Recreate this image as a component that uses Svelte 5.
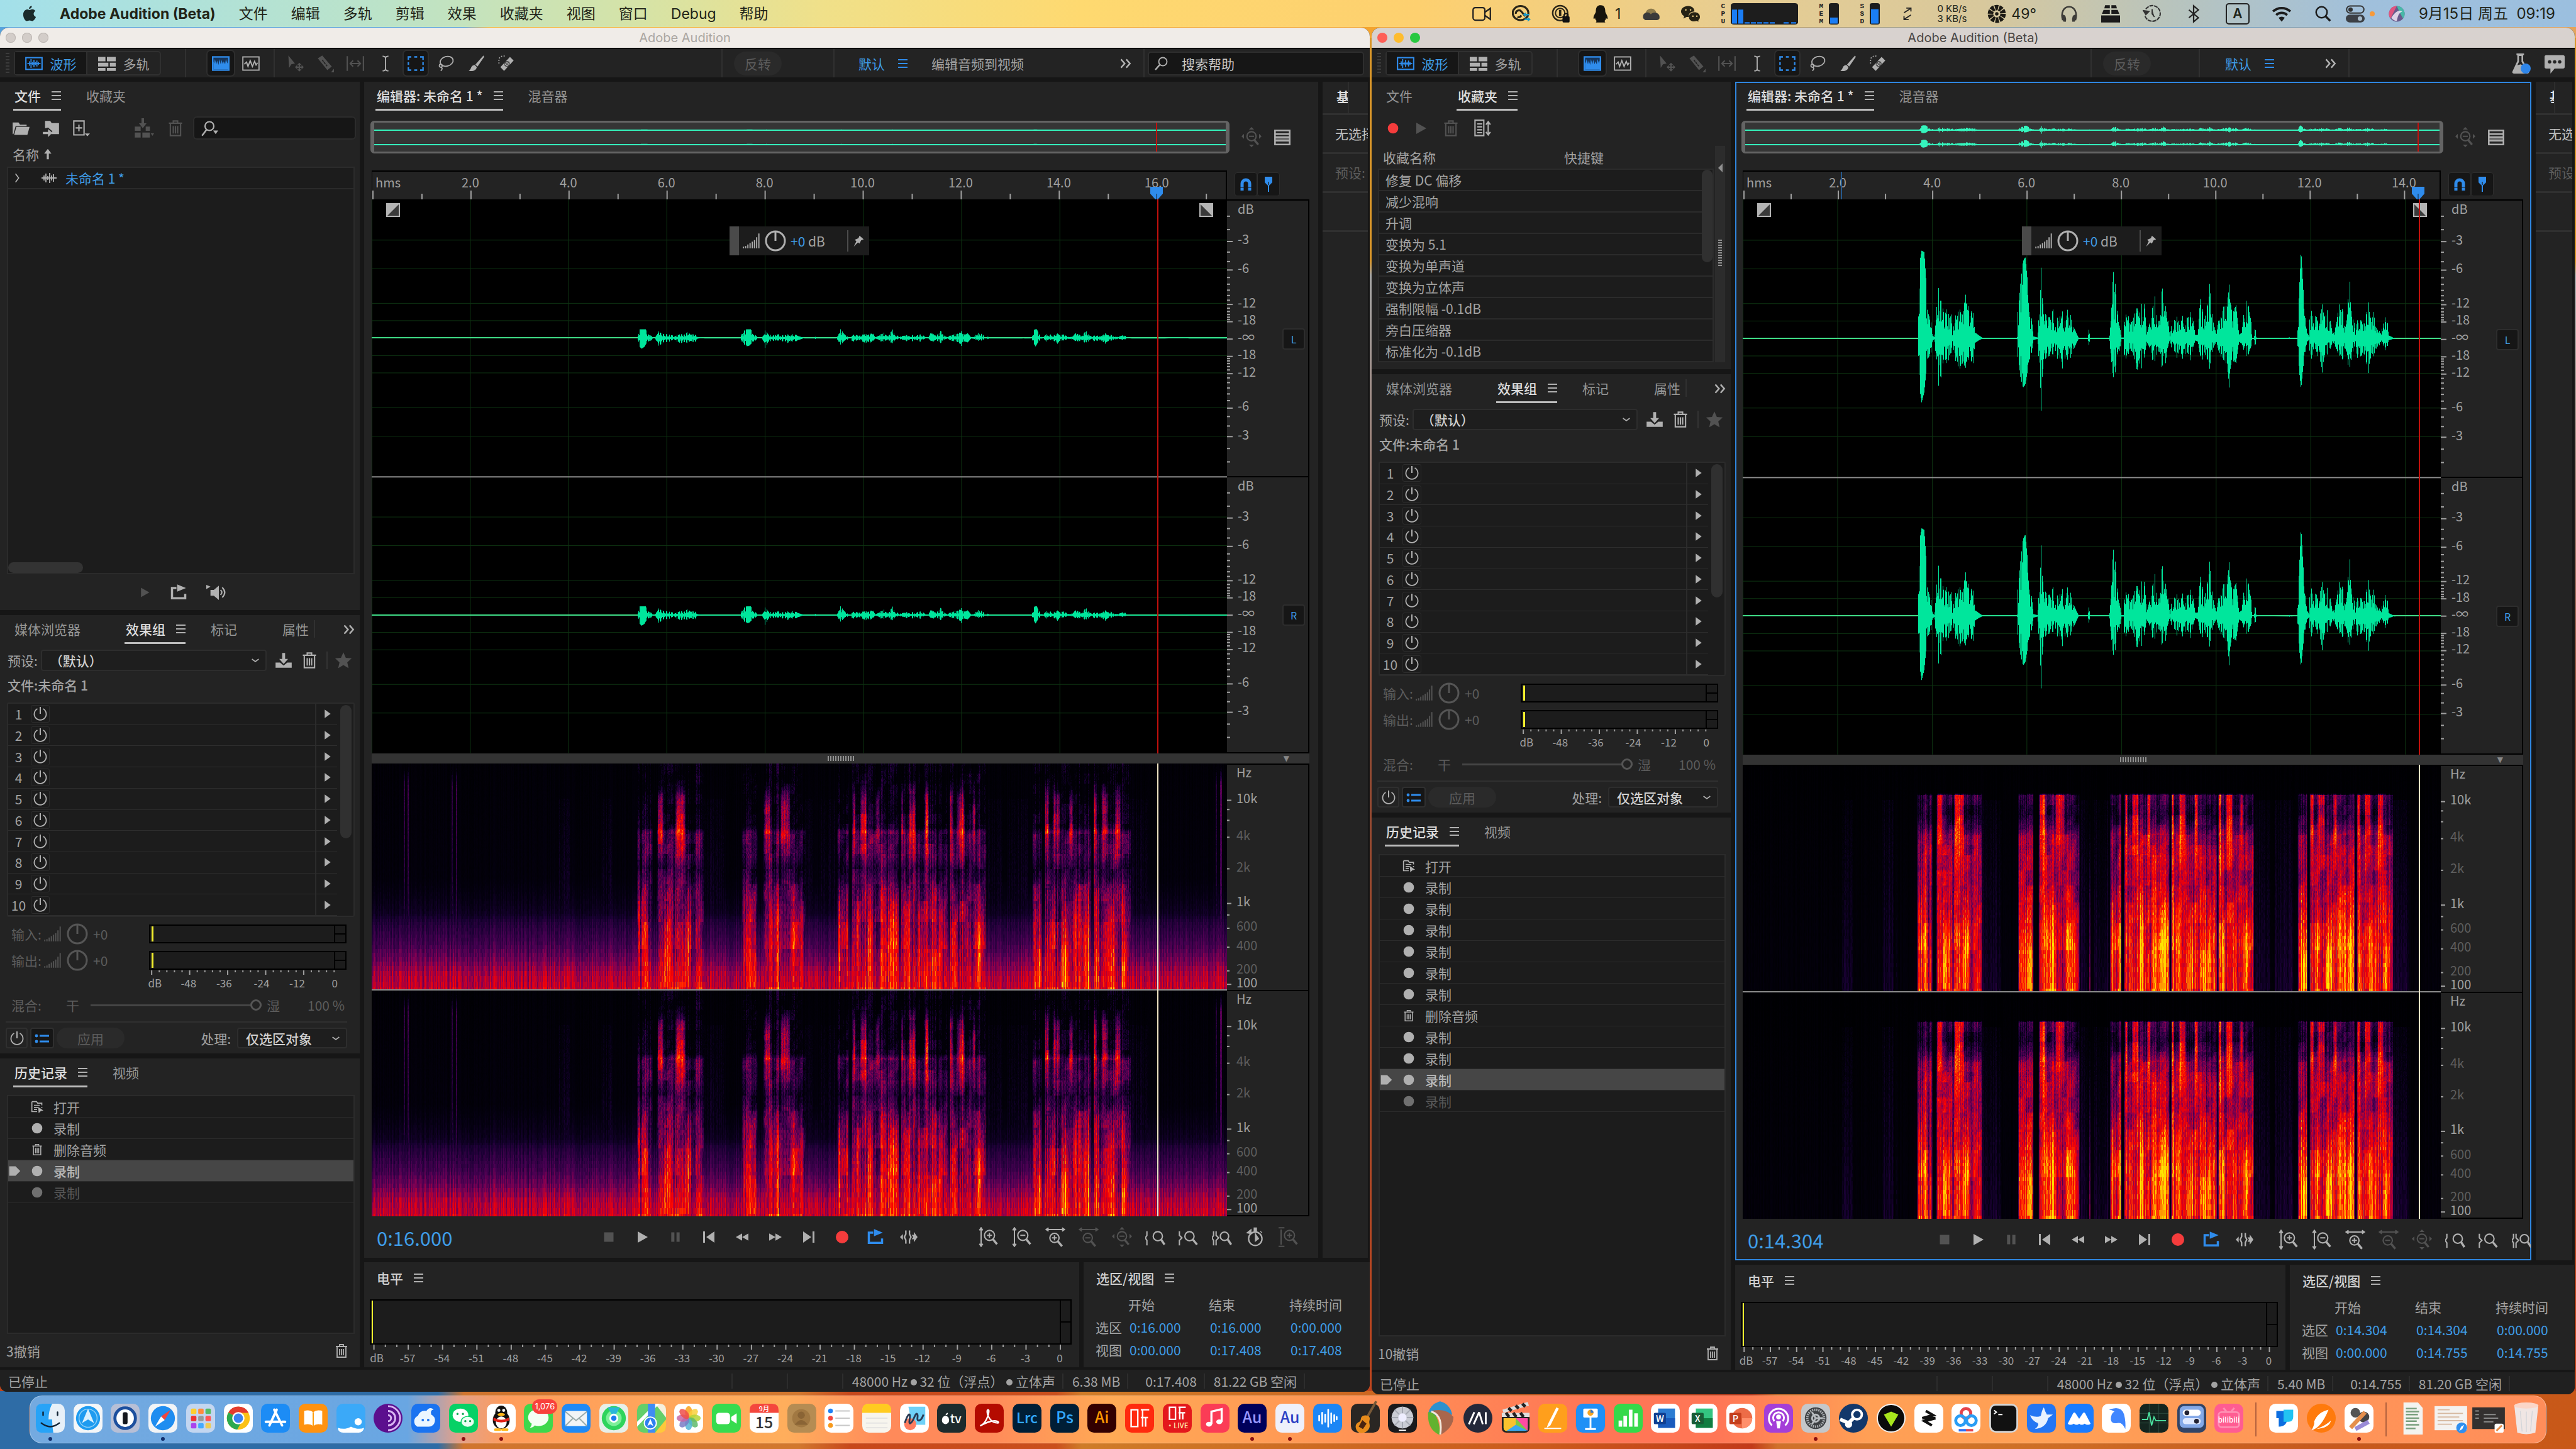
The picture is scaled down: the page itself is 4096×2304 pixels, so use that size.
<script>
  const menus = ['文件', '编辑', '多轨', '剪辑', '效果', '收藏夹', '视图', '窗口', 'Debug', '帮助'];

  const wins = [
    {
      id: 'main', title: 'Adobe Audition', focused: false, length: 17.408, head: 16, delay: 1.71, gain: 0.13,
      upper: ['文件', '收藏夹'], upperActive: 0, workspaces: ['编辑音频到视频'],
      history: [['open', '打开'], ['rec', '录制'], ['trash', '删除音频'], ['rec', '录制', 'current'], ['rec', '录制', 'undone']],
      undo: '3撤销', time: '0:16.000', total: '0:17.408', size: '6.38 MB', free: '81.22 GB 空闲'
    },
    {
      id: 'beta', title: 'Adobe Audition (Beta)', focused: true, length: 14.755, head: 14.304, delay: 0, gain: 1, hover: 2.07,
      upper: ['文件', '收藏夹'], upperActive: 1, workspaces: [],
      history: [
        ['open', '打开'], ['rec', '录制'], ['rec', '录制'], ['rec', '录制'], ['rec', '录制'], ['rec', '录制'], ['rec', '录制'],
        ['trash', '删除音频'], ['rec', '录制'], ['rec', '录制'], ['rec', '录制', 'current'], ['rec', '录制', 'undone']
      ],
      undo: '10撤销', time: '0:14.304', total: '0:14.755', size: '5.40 MB', free: '81.20 GB 空闲'
    }
  ];

  const favourites = ['修复 DC 偏移', '减少混响', '升调', '变换为 5.1', '变换为单声道', '变换为立体声', '强制限幅 -0.1dB', '旁白压缩器', '标准化为 -0.1dB'];
  const slots = [1, 2, 3, 4, 5, 6, 7, 8, 9, 10];
  const levels = Array.from({ length: 20 }, (_, i) => i * 3 - 57);

  // --- axes ---------------------------------------------------------------
  const dbMajor = [3, 6, 12, 18];
  const dbMinor = [1, 2, 4, 5, 7, 8, 9, 10, 11, 13, 14, 15, 16, 17];
  const amp = (db) => Math.pow(10, -db / 20);
  const hz = [
    [4, 'Hz', 0], [15.5, '10k', 2], [31.9, '4k', 1], [45.9, '2k', 1], [61.3, '1k', 2],
    [72.3, '600', 1], [80.7, '400', 1], [91.2, '200', 1], [97.2, '100', 2]
  ];
  const seconds = (len) => Array.from({ length: Math.floor(len) + 1 }, (_, i) => i);

  // --- take: [position, peak up, peak down] -------------------------------
  const take = `345 60 60,349 220 150,352 245 180,357 240 150,360 170 100,363 90 70,366 60 50,369 50 45,372 8 8,376 2 2,
    378 45 45,380 90 60,383 143 135,388 105 110,392 80 65,397 82 70,402 68 62,407 66 40,409 8 8,412 40 40,415 65 65,420 75 80,423 80 85,
    428 65 70,433 125 85,438 90 60,444 75 65,449 70 70,452 15 12,458 8 6,465 1 1,529 1 1,530 70 50,535 155 110,540 215 138,544 228 130,
    548 165 95,552 60 60,556 55 40,559 5 5,567 2 2,569 60 60,573 206 213,577 90 80,582 65 55,588 58 50,596 82 45,600 30 35,604 60 60,
    608 60 55,613 75 85,618 45 55,622 80 60,628 65 55,634 30 30,640 10 10,643 1 1,660 1 1,662 25 20,664 1 1,700 1 1,702 40 40,704 90 70,
    707 188 110,711 150 95,715 70 40,719 35 35,722 2 2,726 2 2,727 35 45,730 68 60,735 62 45,740 45 35,746 70 60,751 85 90,756 70 70,
    760 98 85,765 95 50,769 10 10,774 40 25,779 80 60,784 120 65,788 60 45,793 50 40,797 130 80,800 182 88,804 90 70,809 45 20,812 3 3,
    815 40 30,820 50 35,825 60 55,830 35 30,836 65 60,840 35 45,844 60 40,849 75 65,855 50 25,859 8 6,864 10 10,868 110 50,873 80 60,
    877 60 45,881 90 60,886 157 88,890 70 40,895 30 20,898 8 8,902 50 35,906 55 50,911 88 60,916 90 70,919 110 90,922 154 143,
    926 80 60,930 75 65,934 100 75,940 10 10,945 15 15,948 60 30,953 105 50,958 90 45,962 60 30,964 1 1,968 1 1,970 33 25,972 1 1,
    1031 0 0,1033 3 3,1036 0 0,1048 1 1,1049 30 30,1052 150 100,1055 248 142,1059 140 80,1063 50 35,1067 15 10,1070 3 3,1071 60 40,
    1074 80 60,1078 40 30,1082 75 35,1086 50 50,1090 70 65,1094 96 98,1098 60 50,1104 80 45,1109 50 30,1116 15 15,1120 40 30,
    1126 98 50,1132 80 60,1138 30 30,1142 110 75,1145 168 83,1149 75 60,1154 40 20,1156 8 8,1159 50 55,1166 50 50,1173 40 45,1176 70 70,
    1180 105 102,1184 55 55,1189 75 50,1194 30 30,1200 20 20,1207 40 20,1211 60 35,1215 50 25,1217 8 6,1224 3 3,1227 0 0,
    1285 0 0,1300 14 14,1315 8 8,1322 16 14,1330 0 0,1395 0 0,1400 12 12,1420 18 18,1424 0 0`
    .split(',').map((p) => p.trim().split(/\s+/).map(Number));

  const bursts = [[344, 372], [379, 464], [531, 559], [569, 645], [701, 722], [727, 812], [814, 900], [901, 968], [1049, 1067], [1071, 1155], [1158, 1226]];
  const strong = [[344, 364], [392, 405], [430, 442], [532, 556], [582, 602], [618, 642], [702, 722], [735, 743], [755, 765], [778, 812], [822, 830], [843, 856], [868, 895], [908, 915], [928, 936], [945, 963], [1050, 1066], [1080, 1090], [1100, 1112], [1122, 1151], [1160, 1170], [1178, 1196], [1207, 1217]];
  const sibilants = [[380, 391], [413, 430], [570, 581], [600, 617], [729, 734], [742, 754], [770, 777], [815, 819], [830, 841], [858, 864], [901, 907], [915, 928], [942, 948], [1071, 1079], [1086, 1099], [1115, 1122], [1158, 1164], [1173, 1184], [1197, 1207]];
  const tails = [[203, 226], [280, 300], [455, 500], [640, 660], [670, 700], [968, 998], [1005, 1042], [1218, 1256]];

  const hash = (x, y) => {
    let n = Math.imul(x + 71, 374761393) + Math.imul(y + 13, 668265263);
    n = Math.imul(n ^ (n >>> 13), 1274126177);
    return ((n ^ (n >>> 16)) >>> 0) / 4294967295;
  };
  const ramp = (pts, f) => {
    if (f <= pts[0][0]) return pts[0][1];
    for (let i = 1; i < pts.length; i++) {
      const [a, va] = pts[i - 1];
      const [b, vb] = pts[i];
      if (f <= b) return va + ((vb - va) * (f - a)) / (b - a);
    }
    return pts[pts.length - 1][1];
  };
  const smooth = (x, seed) => {
    const i = Math.floor(x);
    const k = x - i;
    return hash(i, seed) * (1 - k) + hash(i + 1, seed) * k;
  };
  const inside = (list, p) => {
    let best = 0;
    for (const [a, b] of list) best = Math.max(best, Math.min(1, (Math.min(p - a, b - p) + 1) / 3));
    return Math.max(0, best);
  };
  const position = (win, x, w) => 21 + ((x / w) * win.length - win.delay) / 0.011408;

  // heat colours from silence to full scale
  const heat = [[0, 0, 0, 2], [0.1, 4, 0, 16], [0.22, 24, 0, 50], [0.38, 72, 0, 82], [0.52, 135, 0, 82], [0.64, 205, 0, 34], [0.74, 250, 0, 0], [0.84, 255, 60, 0], [0.93, 255, 160, 0], [1, 255, 232, 0]];
  const lut = Array.from({ length: 256 }, (_, i) => [1, 2, 3].map((c) => ramp(heat.map((s) => [s[0], s[c]]), i / 255)));

  const loud = {
    floor: [[0, 0], [0.3, 0.02], [1, 0.05]],
    voice: [[0.125, 0], [0.13, 0.3], [0.22, 0.2], [0.28, 0.36], [0.31, 0.5], [0.4, 0.58], [0.5, 0.54], [0.6, 0.6], [0.75, 0.67], [1, 0.7]],
    hiss: [[0.125, 0], [0.13, 0.42], [0.24, 0.5], [0.3, 0.32], [0.38, 0.16], [0.5, 0.08], [1, 0.02]],
    tone: [[0.5, 0], [0.62, 0.06], [0.72, 0.13], [0.8, 0.19], [1, 0.15]],
    swing: 1
  };
  const quiet = {
    floor: [[0, 0.03], [0.5, 0.06], [0.6, 0.12], [0.66, 0.16], [0.69, 0.24], [0.8, 0.36], [0.86, 0.46], [0.92, 0.58], [1, 0.64]],
    voice: [[0.1, 0.02], [0.28, 0.1], [0.3, 0.32], [0.4, 0.32], [0.46, 0.2], [0.55, 0.34], [0.72, 0.42], [0.85, 0.54], [1, 0.68]],
    hiss: [[0.06, 0], [0.14, 0.36], [0.2, 0.5], [0.28, 0.52], [0.31, 0.38], [0.36, 0.26], [0.45, 0.12], [1, 0]],
    tone: [[0.5, 0], [0.6, 0.12], [0.7, 0.22], [0.85, 0.18], [1, 0.06]],
    swing: 1.1
  };

  function spectrum(canvas, win) {
    const w = canvas.width;
    const h = canvas.height >> 1;
    const ctx = canvas.getContext('2d');
    const img = ctx.createImageData(w, h);
    const m = win.gain === 1 ? loud : quiet;
    const bins = [];
    for (let y = 0; y < h; ) {
      const f = y / h;
      const n = Math.round(2 + 8 * f * f * f);
      bins.push([y, Math.min(h, y + n), ramp(m.floor, f), ramp(m.voice, f), ramp(m.hiss, f), ramp(m.tone, f), f]);
      y += n;
    }
    const clicks = win.gain === 1 ? [[2.15, 0.26], [3.25, 0.14], [7.33, 0.6], [11.6, 0.3]] : [[0.66, 0.32], [0.74, 0.36], [1.63, 0.3], [1.72, 0.36], [17.18, 0.28], [17.28, 0.42]];
    for (let x = 0; x < w; x++) {
      const p = position(win, x, w);
      const t = (x / w) * win.length;
      const v = inside(bursts, p);
      const s = inside(strong, p);
      const k = inside(sibilants, p);
      const haze = inside(tails, p);
      const col = hash(x, 5) - 0.5;
      const slow = smooth(p / 5, 9) - 0.5;
      const pulse = Math.sin(p * 2.15);
      let click = 0;
      for (const [ct, cv] of clicks) if (Math.abs(t - ct) < 0.014) click = cv;
      bins.forEach(([y0, y1, fl, vo, hi, to, f], b) => {
        const cell = hash(x, b * 7 + 3) - 0.5;
        const form = smooth(p / 9 + b * 0.07, 40 + (b >> 3)) - 0.5;
        let a = fl + (cell * 0.5 + col) * (0.04 + fl * 0.3);
        if (haze && f > 0.15) a = Math.max(a, haze * (0.04 + f * 0.14) + cell * 0.08 + col * 0.12);
        if (click) {
          const fall = win.gain === 1 ? Math.max(0, f - 0.15) : f < 0.1 ? f * 10 : 1 - f * 0.4;
          a = Math.max(a, click * fall + cell * 0.1);
        }
        if (v > 0 && (vo > 0 || hi > 0)) {
          const tex = (cell * 0.16 + col * 0.22 + slow * 0.24 + form * 0.2) * m.swing + (f > 0.55 ? pulse * 0.07 : 0);
          a = Math.max(a, v * (vo + hi * k + to * s + tex));
        }
        const c = lut[Math.max(0, Math.min(255, Math.round(a * 255)))];
        for (let y = y0; y < y1; y++) {
          const i = (y * w + x) * 4;
          img.data[i] = c[0];
          img.data[i + 1] = c[1];
          img.data[i + 2] = c[2];
          img.data[i + 3] = 255;
        }
      });
    }
    ctx.putImageData(img, 0, 0);
    ctx.putImageData(img, 0, canvas.height - h);
    ctx.fillStyle = '#8c8c8c';
    ctx.fillRect(0, h - 1, w, 2);
  }

  function wave(canvas, win, overview) {
    const w = canvas.width;
    const half = canvas.height / 4;
    const ctx = canvas.getContext('2d');
    ctx.clearRect(0, 0, w, canvas.height);
    for (const mid of [half, half * 3]) {
      ctx.fillStyle = overview ? '#35f5bd' : '#3fdc86';
      ctx.fillRect(0, Math.round(mid) - 1, w, 2);
      ctx.fillStyle = overview ? '#35f5bd' : '#00e69c';
      for (let x = 0; x < w; x++) {
        const p = position(win, x, w);
        if (p < 344 || (win.gain === 1 && p > 1230)) continue;
        const i = take.findIndex((q) => q[0] >= p);
        if (i < 1) continue;
        const [a, ua, da] = take[i - 1];
        const [b, ub, db] = take[i];
        const r = (p - a) / (b - a);
        const j = hash(x, 77) > 0.5 ? 0.75 + 0.25 * hash(x, 3) : 0.3 + 0.35 * hash(x, 4);
        const edge = ua < 12 || ub < 12 || r < 0.12 || r > 0.88 || ua + ub > 380 ? 1 : j;
        let up = ((ua + (ub - ua) * r) * edge) / 388;
        let dn = ((da + (db - da) * r) * edge) / 388;
        if (win.gain < 1) {
          const tail = p > 1230 ? 0.5 : 1;
          up = Math.min(0.062, up * win.gain * tail);
          dn = Math.min(0.078, dn * win.gain * tail * 1.3);
        }
        ctx.fillRect(x, mid - up * half, 1, Math.max(1, (up + dn) * half));
      }
    }
  }

  function paint(canvas, { kind, win }) {
    const draw = () => {
      const w = canvas.clientWidth;
      const h = canvas.clientHeight;
      if (!w || !h) return;
      canvas.width = w;
      canvas.height = h;
      if (kind === 'spectrum') spectrum(canvas, win);
      else wave(canvas, win, kind === 'overview');
    };
    draw();
    const ro = new ResizeObserver(draw);
    ro.observe(canvas);
    return { destroy: () => ro.disconnect() };
  }

  // --- interface icons, 24 unit box ---------------------------------------
  const mag = '<circle cx="13" cy="10" r="6" fill="none" stroke="currentColor" stroke-width="1.6"/><path d="M17 14.500l5 6" stroke="currentColor" stroke-width="2.600"/>';
  const art = {
    wavebox: '<rect x="1" y="4" width="22" height="16" fill="none" stroke="currentColor" stroke-width="1.800"/><path d="M3 12h18M6 9v6M8 6v12M10 10v4M12 7v10M14 10v4M16 8v8M18 10v4" stroke="currentColor" stroke-width="1.500"/>',
    multi: '<path d="M0 3h10v6H0zM12 3h12v6H12zM0 11h14v5H0zM16 11h8v5h-8zM0 18h10v4H0zM12 18h12v4H12z" fill="currentColor"/>',
    waveview: '<rect x="1" y="3" width="22" height="18" fill="#15355c" stroke="currentColor" stroke-width="2"/><path d="M2 20V9l1 3 1-6 2 7 1-5 2 6 1-8 2 7 1-6 2 6 1-4 2 4 1-7 2 6 1-4 1 3v9z" fill="currentColor"/>',
    spectral: '<rect x="1" y="3" width="22" height="18" fill="none" stroke="currentColor" stroke-width="1.600"/><path d="M3 13l3-3 2 6 3-8 3 8 3-7 2 5 2-3" fill="none" stroke="currentColor" stroke-width="1.600"/>',
    move: '<path d="M3 1l9 11-5 1-3 5z" fill="currentColor"/><path d="M18 11l3 3h-2v2h2v-2l3 3-3 3v-2h-2v2h2l-3 3-3-3h2v-2h-2v2l-3-3 3-3v2h2v-2h-2z" fill="currentColor"/>',
    razor: '<path d="M2 5l6-4 13 15-6 5z" fill="currentColor"/><path d="M8 7l7 9" stroke="#232323" stroke-width="1.500" stroke-dasharray="3 1"/><path d="M24 24v-5l-4 5z" fill="currentColor"/>',
    slip: '<path d="M1 2v20M23 2v20M5 12h14M9 8l-4 4 4 4M15 8l4 4-4 4" fill="none" stroke="currentColor" stroke-width="1.800"/>',
    ibeam: '<path d="M8 2c2 0 4 1 4 3v14c0 2-2 3-4 3M16 2c-2 0-4 1-4 3v14c0 2 2 3 4 3" fill="none" stroke="currentColor" stroke-width="1.600"/>',
    marquee: '<path d="M2 7V3h4M10 3h4M18 3h4v4M22 10v4M22 17v4h-4M14 21h-4M6 21H2v-4M2 14v-4" fill="none" stroke="currentColor" stroke-width="2"/>',
    lasso: '<ellipse cx="13" cy="9" rx="9" ry="6.500" transform="rotate(-15 13 9)" fill="none" stroke="currentColor" stroke-width="1.600"/><circle cx="5" cy="15" r="2" fill="none" stroke="currentColor" stroke-width="1.400"/><path d="M5 17c3 1 2 3 0 5" fill="none" stroke="currentColor" stroke-width="1.500"/>',
    brush: '<path d="M22 1l1 2-9 13-3-2.500z" fill="currentColor"/><path d="M10 14l3 3c-1 5-6 6-11 5 4-2 2-7 8-8z" fill="currentColor"/>',
    heal: '<path d="M4 17L17 3l5 5L9 22z" fill="currentColor"/><circle cx="13" cy="12.500" r="4" fill="#232323" fill-opacity=".7"/><path d="M11 13h.1M13 11h.1M13 14.500h.1M15 12.500h.1" stroke="currentColor" stroke-width="2" stroke-linecap="round"/><path d="M2 12V7c0-4 5-6 9-5" fill="none" stroke="currentColor" stroke-width="1.500" stroke-dasharray="1.500 2"/>',
    folder: '<path d="M1 4h8l2 3h9v2H5L2 20H1z" fill="currentColor"/><path d="M6 10h18l-3 11H3z" fill="currentColor"/>',
    import: '<path d="M4 2h7l2 3h10v15H12l2-4-6-5-4 1z" fill="currentColor"/><path d="M1 17h7v-4l6 5-6 6v-4H1z" fill="currentColor"/>',
    newfile: '<path d="M2 2h14v19H2z" fill="none" stroke="currentColor" stroke-width="1.800"/><path d="M9 7v9M4.500 11.500h9" stroke="currentColor" stroke-width="1.800"/><path d="M17 19h7l-3.500 4z" fill="currentColor"/>',
    insert: '<path d="M1 10h7v5H1zM1 17h7v6H1zM10 17h9v6h-9zM14 10h5v5h-5zM9 0h3v6h3l-4.500 6L6 6h3z" fill="currentColor"/><path d="M20 18h4l-2 3z" fill="currentColor"/>',
    trash: '<path d="M3 5h18M9 4V2h6v2M5 6v16h14V6M9 9v10M12 9v10M15 9v10" fill="none" stroke="currentColor" stroke-width="1.800"/>',
    filter: '<circle cx="12" cy="9" r="6" fill="none" stroke="currentColor" stroke-width="1.900"/><path d="M8 14l-6 8" stroke="currentColor" stroke-width="2.200"/><path d="M17 15h7l-3.500 5z" fill="currentColor"/>',
    find: '<circle cx="14" cy="9" r="6.500" fill="none" stroke="currentColor" stroke-width="1.900"/><path d="M9 14l-7 8" stroke="currentColor" stroke-width="2.600"/>',
    chevron: '<path d="M8 4l6 8-6 8" fill="none" stroke="currentColor" stroke-width="2"/>',
    down: '<path d="M4 9l8 6 8-6" fill="none" stroke="currentColor" stroke-width="2.400"/>',
    up: '<path d="M12 2l7 9h-5v11h-4V11H5z" fill="currentColor"/>',
    more: '<path d="M3 4l7 8-7 8M13 4l7 8-7 8" fill="none" stroke="currentColor" stroke-width="3"/>',
    clip: '<path d="M0 12h24M4 8v8M7 5v14M10 9v6M13 4v16M16 8v8M19 6v12" stroke="currentColor" stroke-width="1.800"/>',
    play: '<path d="M5 3l16 9-16 9z" fill="currentColor"/>',
    slot: '<path d="M5 2l14 10L5 22z" fill="currentColor"/>',
    loop: '<path d="M9 6H3v14h18v-6" fill="none" stroke="currentColor" stroke-width="3"/><path d="M10 1l12 5-12 5z" fill="currentColor"/>',
    speaker: '<path d="M0 3l5 2-5 3zM5 9h4l6-5v17l-6-5H5z" fill="currentColor"/><path d="M17 9q3 3 0 6M19 6q6 6 0 12" fill="none" stroke="currentColor" stroke-width="1.600"/>',
    save: '<path d="M1 15h6l5 4 5-4h6v7H1z" fill="currentColor"/><path d="M10 2h4v8h4l-6 7-6-7h4z" fill="currentColor"/>',
    star: '<path d="M12 1l3.300 7.500 8 .8-6 5.400 1.800 8L12 18.500 4.900 22.700l1.800-8-6-5.400 8-.8z" fill="currentColor"/>',
    power: '<path d="M7.500 4a9.500 9.500 0 1 0 9 0" fill="none" stroke="currentColor" stroke-width="1.800"/><path d="M12 1v11" stroke="currentColor" stroke-width="2"/>',
    listed: '<circle cx="3" cy="8" r="2.400" fill="currentColor"/><circle cx="3" cy="17" r="2.400" fill="currentColor"/><path d="M8 8h15M8 17h15" stroke="currentColor" stroke-width="3"/>',
    ramp: '<path d="M1 22v-2M4 22v-3M7 22v-5M10 22v-7M13 22v-9M16 22V11M19 22V7M22 22V2" stroke="currentColor" stroke-width="1.600"/>',
    dial: '<circle cx="12" cy="12" r="10" fill="none" stroke="currentColor" stroke-width="2"/><path d="M12 2v10" stroke="currentColor" stroke-width="2"/>',
    pin: '<path d="M14 2l8 7-5 2-3 6-3-2-8 8 5-10-3-3 7-3z" fill="currentColor"/>',
    rec: '<circle cx="12" cy="12" r="10" fill="currentColor"/>',
    open: '<path d="M2 2h9l2 3h8v4M21 14v-2M12 21H2V2M6 9h11M6 13h8M6 17h6" fill="none" stroke="currentColor" stroke-width="2"/><path d="M14 12l10 7-5 1-4 4z" fill="currentColor"/>',
    mark: '<path d="M2 3h12l9 9-9 9H2z" fill="currentColor"/>',
    batch: '<path d="M2 1h12v21H2z" fill="none" stroke="currentColor" stroke-width="1.800"/><path d="M5 6h7M5 10h7M5 14h7M5 18h7M20 4v16M17 7l3-4 3 4M17 17l3 4 3-4" fill="none" stroke="currentColor" stroke-width="1.800"/>',
    navzoom: '<circle cx="12" cy="11" r="5.500" fill="none" stroke="currentColor" stroke-width="1.600"/><path d="M15 15l5 6" stroke="currentColor" stroke-width="2.600"/><path d="M9 11h6" stroke="currentColor" stroke-width="1.500"/><path d="M12 0l3 3H9zM12 24l3-3H9zM0 11l3-3v6zM24 11l-3-3v6z" fill="currentColor"/>',
    rows: '<path d="M2 3h20v19H2zM2 8h20M2 12h20M2 17h20" fill="none" stroke="currentColor" stroke-width="2.200"/><path d="M3 13h18v4H3z" fill="currentColor" opacity=".5"/>',
    magnet: '<path d="M6 22V11a6 6 0 0 1 12 0v11" fill="none" stroke="currentColor" stroke-width="5"/><path d="M3 17h6M15 17h6" stroke="#161616" stroke-width="1.200"/>',
    tack: '<path d="M6 0h12v9l-5 5v10h-2V14L6 9z" fill="currentColor"/><path d="M12 8v5" stroke="#161616" stroke-width="1.200"/>',
    stop: '<path d="M3 3h18v18H3z" fill="currentColor"/>',
    pause: '<path d="M4 3h6v18H4zM14 3h6v18h-6z" fill="currentColor"/>',
    prev: '<path d="M3 3h3v18H3zM21 3v18L8 12z" fill="currentColor"/>',
    next: '<path d="M18 3h3v18h-3zM3 3v18l13-9z" fill="currentColor"/>',
    rew: '<path d="M12 5v14L0 12zM24 5v14l-12-7z" fill="currentColor"/>',
    ff: '<path d="M0 5v14l12-7zM12 5v14l12-7z" fill="currentColor"/>',
    skip: '<path d="M8 3v5l-2 4 2 4v5M13 3v5l2 4-2 4v5" fill="none" stroke="currentColor" stroke-width="2"/><path d="M16 9h3V5l5 7-5 7v-4h-3l2-3zM4 8v8l-4-4z" fill="currentColor"/>',
    vin: mag + '<path d="M3 1v22M1 4l2-3 2 3M1 20l2 3 2-3M10 10h6M13 7v6" fill="none" stroke="currentColor" stroke-width="1.500"/>',
    vout: mag + '<path d="M3 1v22M1 4l2-3 2 3M1 20l2 3 2-3M10 10h6" fill="none" stroke="currentColor" stroke-width="1.500"/>',
    hin: '<circle cx="11" cy="13" r="5.500" fill="none" stroke="currentColor" stroke-width="1.600"/><path d="M15 17l5 6" stroke="currentColor" stroke-width="2.600"/><path d="M1 3h22M4 1L1 3l3 2M20 1l3 2-3 2M8 13h6M11 10v6" fill="none" stroke="currentColor" stroke-width="1.500"/>',
    hout: '<circle cx="11" cy="13" r="5.500" fill="none" stroke="currentColor" stroke-width="1.600"/><path d="M15 17l5 6" stroke="currentColor" stroke-width="2.600"/><path d="M1 3h22M4 1L1 3l3 2M20 1l3 2-3 2M8 13h6" fill="none" stroke="currentColor" stroke-width="1.500"/>',
    zin: '<path d="M2 5v5l-2 3 2 3v6" fill="none" stroke="currentColor" stroke-width="1.600"/><circle cx="15" cy="11" r="5.500" fill="none" stroke="currentColor" stroke-width="1.600"/><path d="M19 15l4 6" stroke="currentColor" stroke-width="2.600"/>',
    zout: '<path d="M1 5v5l3 3-3 3v6" fill="none" stroke="currentColor" stroke-width="1.600"/><circle cx="13" cy="11" r="5.500" fill="none" stroke="currentColor" stroke-width="1.600"/><path d="M17 15l5 6" stroke="currentColor" stroke-width="2.600"/>',
    zsel: '<path d="M2 5v5l-2 3 2 3v6M5 5v5l3 3-3 3v6" fill="none" stroke="currentColor" stroke-width="1.600"/><circle cx="15" cy="11" r="5" fill="none" stroke="currentColor" stroke-width="1.600"/><path d="M19 15l4 6" stroke="currentColor" stroke-width="2.600"/>',
    timer: '<circle cx="12" cy="14" r="8" fill="none" stroke="currentColor" stroke-width="1.700"/><path d="M10.500 1h3v4h-3zM2 7l5-4v5zM12 8l4 6-4 3zM18 5l2 2" fill="currentColor" stroke="currentColor" stroke-width="1"/>',
    vfull: mag + '<path d="M3 3v18M0 1h7M0 23h7M10 10h6M13 7v6" fill="none" stroke="currentColor" stroke-width="1.500"/>',
    flask: '<path d="M7 0h9v2h-1v7l7 13q0 2-2 2H4q-2 0-2-2L8 9V2H7z" fill="currentColor"/><path d="M10 3h3v7l3 5-4-2-4 1 2-4z" fill="#232323"/><circle cx="18" cy="18" r="6" fill="#2f86ea"/>',
    chat: '<path d="M2 2h20q2 0 2 2v12q0 2-2 2H12l-5 6v-6H2q-2 0-2-2V4q0-2 2-2z" fill="currentColor"/><path d="M6 10h.1M12 10h.1M18 10h.1" stroke="#232323" stroke-width="4" stroke-linecap="round"/>'
  };

  const tools = [['move', '移动', 'off'], ['razor', '切断所选剪辑', 'off'], ['slip', '滑动', 'off'], ['ibeam', '时间选择', ''], ['marquee', '框选', 'on'], ['lasso', '套索选择', ''], ['brush', '画笔选择', ''], ['heal', '污点修复刷', '']];
  const transport = [['stop', '停止', 'off'], ['play', '播放', ''], ['pause', '暂停', 'off'], ['prev', '上一个', ''], ['rew', '快退', ''], ['ff', '快进', ''], ['next', '下一个', ''], ['rec', '录音', 'red'], ['loop', '循环', 'blue'], ['skip', '跳过', '']];
  const zooms = [['vin', '放大振幅', ''], ['vout', '缩小振幅', ''], ['hin', '放大时间', ''], ['hout', '缩小时间', 'off'], ['navzoom', '全部缩小', 'off'], ['zin', '放大入点', ''], ['zout', '放大出点', ''], ['zsel', '缩放选区', ''], ['timer', '定时', ''], ['vfull', '重置振幅', 'off']];
  const small = ['stop', 'pause', 'rew', 'ff'];
  const transportSize = (name) => (name === 'loop' || name === 'skip' ? 'l' : small.includes(name) ? 's' : 'm');

  // --- menu bar extras ----------------------------------------------------
  const status = {
    cam: '<rect x="1" y="4" width="15" height="16" rx="3" fill="none" stroke="#222" stroke-width="1.800"/><path d="M16 10l7-5v14l-7-5" fill="none" stroke="#222" stroke-width="1.800"/>',
    cc: '<ellipse cx="11" cy="11" rx="10" ry="9" fill="none" stroke="#2b2618" stroke-width="2.500"/><path d="M5 12a4 4 0 0 1 7-3l5 6M7 16a4 4 0 0 0 5-2" fill="none" stroke="#2b2618" stroke-width="2.500"/><path d="M14 13l4-3v2h4v2h-4v2zM24 19l-4-3v2h-4v2h4v2z" fill="#1b9cc9"/>',
    pass: '<circle cx="11" cy="11" r="9.500" fill="none" stroke="#2b2618" stroke-width="2"/><circle cx="11" cy="11" r="6" fill="none" stroke="#2b2618" stroke-width="1.600"/><path d="M11 7v8" stroke="#2b2618" stroke-width="3"/><rect x="14" y="15" width="9" height="8" rx="1.500" fill="#111"/><path d="M16 15v-2q2.500-3 5 0v2" fill="none" stroke="#111" stroke-width="1.600"/>',
    qq: '<path d="M12 1c5 0 6 4 6 8 0 2 3 5 3 8 0 2-1 2-2 0 0 2-1 3-2 4l1 2H6l1-2c-1-1-2-2-2-4-1 2-2 2-2 0 0-3 3-6 3-8 0-4 1-8 6-8z" fill="#17140c"/>',
    cloud: '<path d="M6 9a7 7 0 0 1 13 2l-7 3-8-1z" fill="#8d7b4c"/><path d="M5 20a5 5 0 0 1 1-9.500c3-1 5 1 6 2 3-4 11-2 11 3a4 4 0 0 1-3 4.500z" fill="#3a3a3a"/>',
    wechat: '<path d="M9 2c5 0 8 3 8 7-5 0-8 3-7 7H7l-4 2 1-3C1 13 0 11 0 9c0-4 4-7 9-7z" fill="#262214"/><path d="M17 10c4 0 7 2 7 6 0 2-1 3-2 4v2l-2-1c-6 2-10-1-10-5s3-6 7-6z" fill="#262214"/><path d="M6 7h.1M12 7h.1M15 15h.1M20 15h.1" stroke="#e5c781" stroke-width="2" stroke-linecap="round"/>',
    arrows: '<path d="M6 10L17 3M10 2h8v6M18 14L7 21M14 22H6v-6" fill="none" stroke="#222" stroke-width="2"/>',
    fan: '<circle cx="12" cy="12" r="8" fill="none" stroke="#1c1a14" stroke-width="7" stroke-dasharray="4 1.030"/><circle cx="12" cy="12" r="2.200" fill="#1c1a14"/>',
    phones: '<path d="M4 20C1 11 5 3 12 3s11 8 8 17" fill="none" stroke="#3d3c38" stroke-width="2"/><path d="M4 13q5 0 4 9l-3 0q-3-4-1-9zM20 13q-5 0-4 9l3 0q3-4 1-9z" fill="#3d3c38"/>',
    tray: '<path d="M5 1h6v4H4zM13 1h6l1 4h-7zM3 7h8v5H1zM13 7h8l2 5H13zM0 14h24v9H0z" fill="#1b1b1b"/>',
    clock: '<path d="M4 6a10 10 0 1 1-1 9" fill="none" stroke="#333" stroke-width="1.700" stroke-dasharray="5 1"/><path d="M1 8l3 5 4-4zM12 6v6l3 4" fill="#333" stroke="#333" stroke-width="1.500"/>',
    bt: '<path d="M6 7l12 10-6 5V2l6 5L6 17" fill="none" stroke="#222" stroke-width="1.800"/>',
    wifi: '<path d="M1 9a16 16 0 0 1 22 0M5 13.500a10 10 0 0 1 14 0" fill="none" stroke="#1c1c1c" stroke-width="3"/><path d="M8 17q4-3 8 0l-4 5z" fill="#1c1c1c"/>',
    search: '<circle cx="10" cy="10" r="7" fill="none" stroke="#1c1c1c" stroke-width="2"/><path d="M15 15l6 6" stroke="#1c1c1c" stroke-width="2.600"/>',
    center: '<rect x="1" y="2" width="22" height="9" rx="4.500" fill="none" stroke="#333" stroke-width="1.600"/><circle cx="6" cy="6.500" r="2.800" fill="#333"/><rect x="0" y="13" width="24" height="10" rx="5" fill="#3c4046"/><circle cx="18" cy="18" r="2.800" fill="#a9bccb"/>',
    siri: '<circle cx="12" cy="12" r="10" fill="#6a5a8c"/><path d="M12 2a10 10 0 0 0-8 16q4-8 8-16z" fill="#e0557f"/><path d="M12 2a10 10 0 0 1 8 16Q15 9 12 2z" fill="#47b9a8"/><path d="M5 17q8-12 14-8-5 1-7 12-4 0-7-4z" fill="#f1e8f4" opacity=".85"/>'
  };

  // --- dock ---------------------------------------------------------------
  const tile = (fill, inner = '') => `<rect x="0" y="0" width="48" height="48" rx="11" fill="${fill}"/>${inner}`;
  const disc = (fill, inner = '') => `<circle cx="24" cy="24" r="24" fill="${fill}"/>${inner}`;
  const word = (s, fill, size = 24, y = 32, x = 24) => `<text x="${x}" y="${y}" text-anchor="middle" font-weight="500" font-size="${size}" fill="${fill}">${s}</text>`;
  const grid9 = ['#ffcd2e', '#ff8b3d', '#5b6', '#e33', '#999', '#f55', '#a4e', '#4af', '#ec5'].map((c, i) => `<rect x="${8 + (i % 3) * 12}" y="${8 + Math.floor(i / 3) * 12}" width="9" height="9" rx="2" fill="${c}"/>`).join('');
  const petals = ['#f9a01b', '#f8d03b', '#b4d335', '#5fba6b', '#54b5d6', '#7a7cc4', '#c766a5', '#ee4f4a'].map((c, i) => `<ellipse cx="24" cy="14" rx="6" ry="10" fill="${c}" opacity=".85" transform="rotate(${i * 45} 24 24)"/>`).join('');
  const dock = [
    { name: '访达', on: 1, svg: tile('#e8f0f8', '<path d="M11 0h16q-6 12-6 26h6q0 12 2 22H11Q0 48 0 37V11Q0 0 11 0z" fill="#27a3f7"/><path d="M12 14v5M36 14v5M9 32q15 12 30 0" fill="none" stroke="#123" stroke-width="2.500" stroke-linecap="round"/>') },
    { name: 'TestFlight', svg: tile('#f4f6f8', '<circle cx="24" cy="24" r="20" fill="#1e9bf0"/><path d="M24 8l10 24-10-6-10 6z" fill="#d9f1ff"/><circle cx="24" cy="24" r="15" fill="none" stroke="#8fd0f7" stroke-width="1.500"/>') },
    { name: '1Password', svg: tile('#b7bfd6', '<circle cx="24" cy="24" r="17" fill="#fff" stroke="#1d4f9e" stroke-width="5"/><rect x="20" y="14" width="8" height="20" rx="3" fill="#15171d"/>') },
    { name: 'Safari', on: 1, svg: tile('#f2f4f6', '<circle cx="24" cy="24" r="20" fill="#1f8df0"/><path d="M37 10L27 27l-6-6z" fill="#f2453d"/><path d="M11 38l10-17 6 6z" fill="#fff"/>') },
    { name: '启动台', svg: tile('#c3d6f0', grid9) },
    { name: 'Chrome', svg: tile('#fff', '<circle cx="24" cy="24" r="19" fill="#fbc116"/><path d="M24 24L7.500 14.500A19 19 0 0 1 41 15H24z" fill="#e33b2e"/><path d="M7.500 14.500A19 19 0 0 0 22 43l8-14-6-5z" fill="#2da94f"/><circle cx="24" cy="24" r="9" fill="#3b82f0" stroke="#fff" stroke-width="2.500"/>') },
    { name: 'App Store', svg: tile('#1c8cf5', '<path d="M26 10L14 36M22 10l13 26M8 30h21M35 30h5" stroke="#fff" stroke-width="4" stroke-linecap="round"/>') },
    { name: '图书', svg: tile('#ff9210', '<path d="M24 14q-6-5-15-2v23q9-3 15 2 6-5 15-2V12q-9-3-15 2z" fill="#fff"/><path d="M24 14v23" stroke="#f90" stroke-width="2"/>') },
    { name: '同步', svg: tile('#3ba9f8', '<path d="M2 40q12 4 22-2 12 6 22 2-2 8-9 8H11q-8 0-9-8z" fill="#fff"/><circle cx="36" cy="30" r="6" fill="#fff"/>') },
    { name: 'Tor', svg: disc('#5b0f8e', '<path d="M24 4a20 20 0 0 1 0 40M24 12a12 12 0 0 1 0 24M24 19a5 5 0 0 1 0 10" fill="none" stroke="#d9b5f2" stroke-width="3"/>') },
    { name: '云', svg: tile('#1a73f0', '<path d="M10 38a10 10 0 0 1 1-18q4-10 14-8 6-8 12-2-6 0-4 8 8 4 6 12-2 8-10 8z" fill="#eaf6ff"/><path d="M19 27h.1M28 27h.1" stroke="#1a73f0" stroke-width="4" stroke-linecap="round"/>') },
    { name: '微信', on: 2, svg: tile('#07d166', '<ellipse cx="19" cy="19" rx="13" ry="11" fill="#fff"/><ellipse cx="31" cy="30" rx="11" ry="9" fill="#e9fff2" stroke="#07d166" stroke-width="1.500"/><path d="M14 17h.1M23 17h.1M27 29h.1M35 29h.1" stroke="#07a850" stroke-width="3.500" stroke-linecap="round"/>') },
    { name: 'QQ', on: 2, svg: tile('#fff', '<ellipse cx="24" cy="27" rx="14" ry="15" fill="#111"/><ellipse cx="24" cy="15" rx="10" ry="12" fill="#111"/><ellipse cx="24" cy="31" rx="9" ry="10" fill="#fff"/><path d="M11 23q13 7 26 0v5q-13 6-26 0z" fill="#e2231a"/><ellipse cx="24" cy="18" rx="6" ry="2.500" fill="#ffb81c"/><path d="M20 11h.1M28 11h.1" stroke="#fff" stroke-width="5" stroke-linecap="round"/><path d="M14 43h8M26 43h8" stroke="#ffb81c" stroke-width="4" stroke-linecap="round"/>') },
    { name: '信息', badge: '1,076', svg: tile('#3ed84c', '<path d="M24 9c10 0 17 6 17 14s-7 14-17 14q-3 0-6-1-3 4-8 4 3-3 3-7-6-4-6-10C7 15 14 9 24 9z" fill="#f4fff4"/>') },
    { name: '邮件', svg: tile('#1f8af6', '<rect x="6" y="12" width="36" height="25" rx="3" fill="#f2f4f6"/><path d="M6 13l18 15 18-15M6 37l13-13M42 37L29 24" fill="none" stroke="#9aa" stroke-width="2"/>') },
    { name: '查找', svg: tile('#e7efe9', '<circle cx="24" cy="24" r="20" fill="#2fd45d"/><circle cx="24" cy="24" r="13" fill="#7df09a"/><path d="M24 24L14 6h20z" fill="#2ab6d8"/><circle cx="24" cy="24" r="6" fill="#1d7bf0" stroke="#fff" stroke-width="3"/>') },
    { name: '地图', svg: tile('#63cf6a', '<path d="M30 0h7q11 0 11 11v12z" fill="#f6efdc"/><path d="M0 30L30 0h7L0 38z" fill="#fff"/><path d="M18 0h12v48H18z" fill="#3f8cf5"/><path d="M48 26v11q0 11-11 11h-7z" fill="#ffc83b"/><circle cx="22" cy="32" r="10" fill="#2d7ff0" stroke="#fff" stroke-width="2"/><path d="M22 25l5 12-5-3-5 3z" fill="#fff"/>') },
    { name: '照片', svg: tile('#fff', petals) },
    { name: 'FaceTime', svg: tile('#37db4f', '<rect x="7" y="15" width="23" height="19" rx="5" fill="#fff"/><path d="M32 22l9-6v17l-9-6z" fill="#fff"/>') },
    { name: '日历', svg: tile('#fff', '<path d="M0 15V11Q0 0 11 0h26q11 0 11 11v4z" fill="#f4473d"/>' + word('9月', '#fff', 11, 12) + word('15', '#333', 26, 41)) },
    { name: '通讯录', svg: tile('#b58c53', '<circle cx="23" cy="24" r="15" fill="#a17842"/><circle cx="23" cy="19" r="6" fill="#8a6435"/><path d="M12 35q11-16 22 0z" fill="#8a6435"/>') },
    { name: '提醒事项', svg: tile('#fff', '<path d="M18 12h24M18 24h24M18 36h24" stroke="#c8c8c8" stroke-width="2"/><circle cx="10" cy="12" r="4" fill="#1f80f5"/><circle cx="10" cy="24" r="4" fill="#f4473d"/><circle cx="10" cy="36" r="4" fill="#f79a1c"/>') },
    { name: '备忘录', svg: tile('#f7f5ee', '<path d="M0 15V11Q0 0 11 0h26q11 0 11 11v4z" fill="#ffcb20"/><path d="M6 24h36M6 32h36M6 40h36" stroke="#ddd" stroke-width="1.500"/>') },
    { name: '无边记', svg: tile('#fff', '<path d="M14 5h28v30H20z" fill="#6fd1f8"/><circle cx="17" cy="34" r="10" fill="#ff7d5f"/><path d="M8 32c6-18 10-18 8-6s4 6 8-4 6-4 5 2 6 6 10-6" fill="none" stroke="#2a3b55" stroke-width="3"/>') },
    { name: 'TV', svg: tile('#1d2b2d', word('tv', '#fff', 20, 32, 31) + '<ellipse cx="14" cy="27" rx="6" ry="7" fill="#fff"/><path d="M14 19q1-4 4-4 0 4-4 4z" fill="#fff"/>') },
    { name: 'Acrobat', svg: tile('#b40b00', '<path d="M10 36c10-4 16-26 12-26s0 22 16 22c4-1-2-6-14-2-8 2-16 8-14 6z" fill="none" stroke="#fff" stroke-width="2.500"/>') },
    { name: 'Lightroom', svg: tile('#001e36', word('Lrc', '#31a8ff', 24)) },
    { name: 'Photoshop', svg: tile('#001e36', word('Ps', '#31a8ff', 26)) },
    { name: 'Illustrator', svg: tile('#330000', word('Ai', '#ff9a00', 26)) },
    { name: 'OF', svg: tile('#ff2a0e', '<path d="M10 10h11v28H10zM26 10h14M26 23h12M29 10v28M34 23v15" fill="none" stroke="#fff" stroke-width="2.500"/>') },
    { name: 'OF LIVE', svg: tile('#e4181c', '<path d="M11 6h10v20H11zM26 6h12M26 15h11M28 6v20M33 15v11" fill="none" stroke="#fff" stroke-width="2.500"/>' + word('•LIVE', '#ffe9a8', 12, 41)) },
    { name: '音乐', svg: tile('#fb3c56', '<path d="M18 34V13l17-4v21" fill="none" stroke="#fff" stroke-width="3.500"/><ellipse cx="14" cy="34" rx="5" ry="4" fill="#fff"/><ellipse cx="31" cy="30" rx="5" ry="4" fill="#fff"/>') },
    { name: 'Audition', on: 2, svg: tile('#00005b', word('Au', '#9999ff', 26)) },
    { name: 'Audition Beta', on: 2, svg: tile('#eef0fb', word('Au', '#2b3fc4', 26)) },
    { name: '语音', svg: tile('#1c86f5', '<path d="M10 20v8M15 15v18M20 18v12M25 10v28M30 16v16M35 19v10M39 22v4" stroke="#fff" stroke-width="2.800" stroke-linecap="round"/>') },
    { name: 'GarageBand', svg: tile('#2a2623', '<path d="M42-4L26 24" stroke="#7a5a38" stroke-width="4"/><path d="M20 20c7-2 13 1 11 7s3 9-2 16-17 8-20 0 1-11 5-13 1-8 6-10z" fill="#e88b1b"/><path d="M19 27l7 6-6 9-7-4z" fill="#4a2410"/>') },
    { name: 'Logic Pro', svg: tile('#1a1a1c', '<circle cx="24" cy="23" r="18" fill="#c9ccd4"/><path d="M24 5v36M6 23h36M11 10l26 26M37 10L11 36" stroke="#a4a8b2" stroke-width="2"/><circle cx="24" cy="23" r="7" fill="#eef"/><path d="M18 44h12" stroke="#fff" stroke-width="2"/>') },
    { name: '滴', svg: '<path d="M24-4q16 4 20 22l-20 4L4 16Q8 0 24-4z" fill="#2b91cf"/><path d="M4 14q18-2 20 38Q2 44 4 14z" fill="#62b22f"/><path d="M8 12q26-6 38 10 0 18-22 30Q30 24 8 12z" fill="#a8664c"/><path d="M9 13q20 6 15 38" fill="none" stroke="#f2e8dc" stroke-width="3"/>' },
    { name: 'Arturia', svg: disc('#23283a', '<path d="M9 34l9-20M17 34l9-20M26 14l6 20M37 14v20" fill="none" stroke="#fff" stroke-width="3"/>') },
    { name: 'Final Cut', svg: '<path d="M1 18h46v22q0 8-8 8H9q-8 0-8-8z" fill="#222"/><path d="M4 24h40v16q0 5-5 5H9q-5 0-5-5z" fill="#7ac943"/><path d="M24 24h20v21z" fill="#ff4ba3"/><path d="M4 24h20v21H9q-5 0-5-5z" fill="#f9c22e"/><path d="M24 35l20 10H9z" fill="#3aa7f0"/><path d="M1 15h46v7H1zM2 10L44-3l2 6L4 15z" fill="#ddd"/><path d="M8 15l5 7M20 15l5 7M32 15l5 7M12 7l5 5M24 3l5 5M35 0l5 5" stroke="#222" stroke-width="5"/>' },
    { name: 'Pages', svg: tile('#ff9f1c', '<path d="M30 6L16 34l-2 6 6-4L34 8z" fill="#fff"/><path d="M10 41h28" stroke="#fff" stroke-width="2"/>') },
    { name: 'Keynote', svg: tile('#1e90f6', '<rect x="12" y="8" width="24" height="15" rx="2" fill="#fff"/><path d="M24 23v18M15 42h18" stroke="#fff" stroke-width="3"/><circle cx="24" cy="15" r="5" fill="#f5a623"/><path d="M24 15v-5a5 5 0 0 1 5 5z" fill="#37c"/>') },
    { name: 'Numbers', svg: tile('#35d94a', '<path d="M11 38V28M19 38V20M28 38V10M37 38V16" stroke="#fff" stroke-width="6"/>') },
    { name: 'Word', svg: tile('#fff', '<path d="M12 8h28v32H12z" fill="#2b7cd3"/><path d="M12 24h28v16H12z" fill="#185abd"/><rect x="5" y="15" width="20" height="19" rx="2" fill="#103f91"/>' + word('W', '#fff', 15, 30, 15)) },
    { name: 'Excel', svg: tile('#fff', '<path d="M12 8h28v32H12z" fill="#33c481"/><path d="M12 24h28v16H12z" fill="#107c41"/><rect x="5" y="15" width="20" height="19" rx="2" fill="#185c37"/>' + word('X', '#fff', 15, 30, 15)) },
    { name: 'PowerPoint', svg: tile('#fff', '<circle cx="26" cy="24" r="17" fill="#ed6c47"/><path d="M26 24h17a17 17 0 0 1-17 17z" fill="#ff8f6b"/><rect x="5" y="15" width="20" height="19" rx="2" fill="#c43e1c"/>' + word('P', '#fff', 15, 30, 15)) },
    { name: '播客', svg: tile('#a43fd8', '<path d="M13 36a16 16 0 1 1 22 0M17 29a9 9 0 1 1 14 0" fill="none" stroke="#fff" stroke-width="3"/><circle cx="24" cy="22" r="4" fill="#fff"/><path d="M20 29h8l-2 12h-4z" fill="#fff"/>') },
    { name: '系统设置', on: 2, svg: tile('#c4c7ca', '<circle cx="24" cy="24" r="18" fill="#3d4043"/><circle cx="24" cy="24" r="14" fill="none" stroke="#a8acb0" stroke-width="4" stroke-dasharray="2 1.500"/><path d="M24 24h12M24 24l-6 10M24 24l-6-10" stroke="#b8bcc0" stroke-width="3"/><circle cx="24" cy="24" r="6" fill="none" stroke="#b8bcc0" stroke-width="3"/>') },
    { name: 'Steam', svg: disc('#12386b', '<circle cx="30" cy="18" r="8" fill="none" stroke="#fff" stroke-width="4"/><path d="M2 26l14 6 8-8" fill="none" stroke="#fff" stroke-width="6"/><circle cx="16" cy="34" r="6" fill="#fff"/>') },
    { name: 'NAVI', svg: disc('#f2f2f2', '<circle cx="24" cy="24" r="22" fill="#0b0b0b"/><path d="M12 18l12-5 12 5-12 20z" fill="#a8e61d"/>') },
    { name: '剪映', svg: tile('#fff', '<path d="M19 12l12 7-18 5M29 36l-12-7 18-5M13 24h22" fill="none" stroke="#111" stroke-width="4.500"/>') },
    { name: '网盘', svg: tile('#fff', '<circle cx="24" cy="16" r="8" fill="none" stroke="#e4434b" stroke-width="5"/><circle cx="15" cy="28" r="8" fill="none" stroke="#2a9df4" stroke-width="5"/><circle cx="33" cy="28" r="8" fill="none" stroke="#2a9df4" stroke-width="5"/><path d="M12 44h12" stroke="#2a6df4" stroke-width="4"/><path d="M24 44h12" stroke="#e4434b" stroke-width="4"/>') },
    { name: '终端', svg: tile('#d5d5d5', '<rect x="3" y="3" width="42" height="42" rx="8" fill="#111"/><path d="M8 11l4 3-4 3M15 18h7" fill="none" stroke="#fff" stroke-width="2"/>') },
    { name: '飞鸟', svg: tile('#2476f3', '<path d="M5 19q12 5 18 1 2-10 5-14 2 7 5 12l10 0-8 6q-3 16-22 18 8-6 5-10-9-3-13-13z" fill="#e8f2ff"/>') },
    { name: '会议', svg: tile('#1a7cff', '<path d="M5 33l9-17q2-3 4 0l6 9 6-9q2-3 4 0l9 17q-4 4-10 0-5 4-9 0-4 4-9 0-6 4-10 0z" fill="#fff"/>') },
    { name: '迅雷', svg: tile('#fff', '<path d="M12 10q20-8 25 8 3 12 2 24-5-12-13-10-10 2-11-6 0-10 6-13-5-3-9-3z" fill="#3f86ff"/>') },
    { name: '活动监视器', svg: tile('#14251f', '<path d="M0 16h48M0 32h48M16 0v48M32 0v48" stroke="#2c4a3f"/><path d="M4 26h9l3-12 4 22 4-14 3 6h17" fill="none" stroke="#4be3a0" stroke-width="2"/>') },
    { name: '连接', svg: tile('#324466', '<rect x="4" y="4" width="40" height="36" rx="7" fill="#84a9e8"/><rect x="9" y="10" width="30" height="10" rx="5" fill="#fff"/><rect x="9" y="24" width="30" height="10" rx="5" fill="#dfe9ff"/><circle cx="16" cy="15" r="4" fill="#223"/><circle cx="32" cy="29" r="4" fill="#223"/>') },
    { name: '哔哩哔哩', svg: tile('#ff5c92', '<rect x="7" y="14" width="34" height="25" rx="5" fill="none" stroke="#ff8fb3" stroke-width="3"/><path d="M15 7l5 6M33 7l-5 6" stroke="#ff8fb3" stroke-width="3"/>' + word('bilibili', '#fff', 12, 31)) },
    { sep: true },
    { name: '腾讯', svg: tile('#fff', '<path d="M12 12h18v12q0 14-14 14V24h-4z" fill="#0c6ee0"/><path d="M24 10h16v12q0 8-8 8h-8z" fill="#22c3f2"/>') },
    { name: '天鹅', svg: disc('#ff7a0c', '<path d="M8 44q16-4 28-34-18 4-24 20 2 2-4 14zM16 42q16-6 24-14-2 12-24 14z" fill="#fff"/>') },
    { name: '播放器', on: 2, svg: tile('#fff', '<circle cx="18" cy="15" r="8" fill="#555"/><circle cx="32" cy="22" r="9" fill="#444"/><path d="M10 40L34 14" stroke="#e58f4c" stroke-width="7"/><path d="M18 42l22-12" stroke="#9a8cd8" stroke-width="7"/>') },
    { sep: true },
    { name: '文稿', svg: '<path d="M8-2h24l8 9v44H8z" fill="#f3f3f0"/><path d="M12 8h18M12 13h22M12 18h20M12 24h22M12 29h18M12 35h22M12 41h16" stroke="#79a07e" stroke-width="2.500"/>' },
    { name: '窗口', svg: '<rect x="-3" y="4" width="54" height="40" fill="#f4f2f0"/><path d="M2 10h20M2 16h42M2 22h36M2 28h42M2 34h24" stroke="#d6b8a0" stroke-width="2"/><circle cx="42" cy="40" r="9" fill="#2f8ff0"/><path d="M46 35l-3 7-5 3 3-7z" fill="#fff"/>' },
    { name: '代码窗口', svg: '<rect x="-3" y="6" width="54" height="36" fill="#33302f"/><path d="M2 12h6M2 18h6M2 24h6M16 18h20M16 24h24M16 30h16" stroke="#8a8a8a" stroke-width="2"/><rect x="34" y="33" width="15" height="15" rx="3" fill="#fff"/><path d="M37 45l9-9" stroke="#e58f4c" stroke-width="3"/>' },
    { name: '废纸篓', svg: '<path d="M4 2h40l-5 46q-15 5-30 0z" fill="#eef0f3" opacity=".9"/><ellipse cx="24" cy="3" rx="20" ry="5" fill="#fbd6c8"/><path d="M14 12l3 34M24 13v34M34 12l-3 34" stroke="#d4d6da" stroke-width="1.500"/>' }
  ];
</script>

{#snippet icon(name, size = 'm')}
  <svg class="ic {size}" viewBox="0 0 24 24" aria-hidden="true">{@html art[name]}</svg>
{/snippet}

{#snippet extra(name)}
  <svg class="extra" viewBox="0 0 24 24" aria-hidden="true">{@html status[name]}</svg>
{/snippet}

{#snippet tabs(names, active, more)}
  <header class="tabs">
    {#each names as name, i}
      <button class="tab" class:active={i === active}>{name}<span class="burger"></span></button>
    {/each}
    {#if more}
      <span class="cut"></span>
      <button class="overflow" aria-label="更多面板">{@render icon('more', 's')}</button>
    {/if}
  </header>
{/snippet}

{#snippet knob(label)}
  <span class="label">{label}</span>
  <span class="gain">{@render icon('ramp', 'l')}{@render icon('dial', 'xxl')}<span>+0</span></span>
  <span class="meter"><i></i><b></b></span>
{/snippet}

{#snippet axis(channel)}
  <div class="axis">
    <svg>
      <text x="17" y="16">dB</text>
      {#each [-1, 1] as dir}
        {#each dbMinor as d}
          <rect x="0" y="{50 + dir * amp(d) * 50}%" width="5" height="2" />
        {/each}
        {#each dbMajor as d}
          <rect x="0" y="{50 + dir * amp(d) * 50}%" width="9" height="2" />
          <text x="17" y="{50 + dir * amp(d) * 50}%">-{d}</text>
        {/each}
      {/each}
      <rect x="0" y="50%" width="9" height="2" />
      <text x="17" y="50%">-∞</text>
    </svg>
    <button class="channel">{channel}</button>
  </div>
{/snippet}

{#snippet hzAxis()}
  <div class="axis">
    <svg>
      {#each hz as [y, text, rank]}
        {#if rank}<rect x="0" y="{y}%" width={rank === 2 ? 7 : 4} height="2" />{/if}
        <text x="15" y="{y}%" class:faint={rank === 1}>{text}</text>
      {/each}
      {#each [19.6, 24.4, 66.4] as y}<rect x="0" y="{y}%" width="4" height="2" />{/each}
    </svg>
  </div>
{/snippet}

<div class="desktop">
  <nav class="menubar">
    <svg class="apple" viewBox="0 0 24 28" aria-hidden="true"><path d="M16 1c0 3-2 5-5 5 0-3 2-5 5-5zM12 8c2 0 3-2 6-1 2 0 3 1 4 3-4 2-4 8 1 10-1 3-4 7-6 7s-3-1-5-1-3 1-5 1c-3 0-6-6-6-11 0-6 4-9 7-9 2 0 3 1 4 1z" fill="#1b2b2b" /></svg>
    <b>Adobe Audition (Beta)</b>
    {#each menus as m}<span>{m}</span>{/each}
    <div class="extras">
      {@render extra('cam')}
      {@render extra('cc')}
      {@render extra('pass')}
      <span class="pair">{@render extra('qq')}1</span>
      {@render extra('cloud')}
      {@render extra('wechat')}
      <span class="stat"><em>CPU</em><svg class="graph" viewBox="0 0 107 46" preserveAspectRatio="none"><rect width="107" height="46" rx="5" fill="#1d1d1d" /><path d="M2 44V14h8v30zM12 44V14h8v30zM22 41h8v3h-8zM32 41h8v3h-8zM42 41h8v3h-8zM52 41h8v3h-8zM62 41h8v3h-8zM84 41h8v3h-8zM96 41h8v3h-8z" fill="#1a7df5" /></svg></span>
      <span class="stat"><em>MEM</em><svg class="load" viewBox="0 0 16 46" preserveAspectRatio="none"><rect width="16" height="46" rx="4" fill="#1d1d1d" /><path d="M2 31h12v13H2z" fill="#1a7df5" /></svg></span>
      <span class="stat"><em>SSD</em><svg class="load" viewBox="0 0 16 46" preserveAspectRatio="none"><rect width="16" height="46" rx="4" fill="#1d1d1d" /><path d="M2 13h12v31H2z" fill="#1a7df5" /></svg></span>
      <span class="net">{@render extra('arrows')}<small>0 KB/s<br />3 KB/s</small></span>
      <span class="pair">{@render extra('fan')}49°</span>
    </div>
    <div class="extras wide">
      {@render extra('phones')}
      {@render extra('tray')}
      {@render extra('clock')}
      {@render extra('bt')}
      <span class="ime">A</span>
      {@render extra('wifi')}
      {@render extra('search')}
    </div>
    <div class="extras last">
      <span class="pair">{@render extra('center')}<i class="orange"></i></span>
      {@render extra('siri')}
      <time>9月15日 周五&nbsp; 09:19</time>
    </div>
  </nav>

  <main class="windows">
    {#each wins as win}
      <section class="window {win.id}" class:focused={win.focused}>
        <header class="title"><i></i><i></i><i></i><h1>{win.title}</h1></header>

        <div class="toolbar">
          <span class="grip"></span>
          <div class="mode">
            <button class="on">{@render icon('wavebox', 'l')}波形</button>
            <button>{@render icon('multi', 'l')}多轨</button>
          </div>
          <span class="bar first"></span>
          <button class="tool boxed on" aria-label="波形视图">{@render icon('waveview', 'l')}</button>
          <button class="tool spectral" aria-label="频谱视图">{@render icon('spectral', 'l')}</button>
          <span class="bar"></span>
          <div class="tools">
            {#each tools as [name, label, state]}
              <button class="tool {state}" aria-label={label}>{@render icon(name, 'l')}</button>
            {/each}
          </div>
          <span class="bar push"></span>
          <button class="pill" disabled>反转</button>
          <span class="bar after"></span>
          <button class="workspace on">默认<span class="burger"></span></button>
          {#each win.workspaces as w}<button class="workspace wide">{w}</button>{/each}
          <button class="dbl" aria-label="更多工作区">{@render icon('more', 's')}</button>
          <span class="bar"></span>
          {#if win.focused}
            <div class="feedback">
              <button aria-label="实验功能">{@render icon('flask', 'xl')}</button>
              <button aria-label="反馈">{@render icon('chat', 'xl')}</button>
            </div>
          {:else}
            <label class="help">{@render icon('find', 'm')}<input type="search" aria-label="搜索帮助" placeholder="搜索帮助" /></label>
          {/if}
        </div>

        <div class="work">
          <aside class="side">
            {#if !win.focused}
              <section class="panel">
                {@render tabs(win.upper, win.upperActive)}
                <div class="filebar">
                  <button aria-label="打开文件">{@render icon('folder', 'l')}</button>
                  <button aria-label="导入文件">{@render icon('import', 'l')}</button>
                  <button aria-label="新建文件">{@render icon('newfile', 'l')}</button>
                  <button class="off far" aria-label="插入多轨">{@render icon('insert', 'xl')}</button>
                  <button class="off" aria-label="删除">{@render icon('trash', 'l')}</button>
                  <label class="search">{@render icon('filter', 'l')}<input aria-label="筛选文件" /></label>
                </div>
                <div class="colhead">名称{@render icon('up', 's')}</div>
                <ul class="files">
                  <li>{@render icon('chevron', 's')}{@render icon('clip')}<a href="#file">未命名 1 *</a></li>
                </ul>
                <div class="preview">
                  <button class="off" aria-label="播放">{@render icon('play', 's')}</button>
                  <button aria-label="循环播放">{@render icon('loop', 'l')}</button>
                  <button aria-label="自动播放">{@render icon('speaker', 'xl')}</button>
                </div>
              </section>
            {:else}
              <section class="panel">
                {@render tabs(win.upper, win.upperActive)}
                <div class="favbar">
                  <button class="red" aria-label="录制收藏">{@render icon('rec', 's')}</button>
                  <button class="off" aria-label="运行收藏">{@render icon('play')}</button>
                  <button class="off" aria-label="删除收藏">{@render icon('trash', 'l')}</button>
                  <button aria-label="编辑收藏">{@render icon('batch', 'l')}</button>
                </div>
                <div class="favs">
                  <table>
                    <thead><tr><th>收藏名称</th><th>快捷键</th></tr></thead>
                    <tbody>
                      {#each favourites as f}<tr><td>{f}</td><td></td></tr>{/each}
                    </tbody>
                  </table>
                  <i class="thumb"></i>
                  <span class="rail"><i></i><b></b></span>
                </div>
              </section>
            {/if}

            <section class="panel effects">
              {@render tabs(['媒体浏览器', '效果组', '标记', '属性'], 1, true)}
              <div class="preset">
                <label for="preset-{win.id}">预设:</label>
                <span class="pick">
                  <select id="preset-{win.id}"><option>（默认）</option></select>{@render icon('down', 'xs')}
                </span>
                <button aria-label="保存预设">{@render icon('save', 'l')}</button>
                <button aria-label="删除预设">{@render icon('trash', 'l')}</button>
                <span class="bar"></span>
                <button class="off" aria-label="收藏预设">{@render icon('star', 'l')}</button>
              </div>
              <p class="target">文件:未命名 1</p>
              <div class="rack">
                <ol>
                  {#each slots as n}
                    <li><span>{n}</span><button aria-label="启用效果 {n}">{@render icon('power')}</button><i></i><button class="arrow" aria-label="选择效果 {n}">{@render icon('slot', 'xs')}</button></li>
                  {/each}
                </ol>
                <i class="thumb"></i>
              </div>
              <div class="io">
                {@render knob('输入:')}
                {@render knob('输出:')}
                <svg class="scale">
                  {#each Array(25) as _, i}
                    <rect x="{1 + i * 3.85}%" y="0" width="2" height={i % 5 ? 3 : 7} />
                  {/each}
                  {#each [[3, 'dB'], [20, '-48'], [38, '-36'], [57, '-24'], [75, '-12'], [94, '0']] as [x, t]}
                    <text x="{x}%" y="22">{t}</text>
                  {/each}
                </svg>
              </div>
              <div class="mix">
                <label for="mix-{win.id}">混合:</label><span>干</span>
                <input id="mix-{win.id}" type="range" value="100" />
                <span>湿</span><output>100 %</output>
              </div>
              <div class="apply">
                <button class="square" aria-label="启用效果组">{@render icon('power')}</button>
                <button class="square on" aria-label="效果列表">{@render icon('listed')}</button>
                <button class="pill" disabled>应用</button>
                <label for="proc-{win.id}">处理:</label>
                <span class="pick">
                  <select id="proc-{win.id}"><option>仅选区对象</option></select>{@render icon('down', 'xs')}
                </span>
              </div>
            </section>

            <section class="panel history">
              {@render tabs(['历史记录', '视频'], 0)}
              <ul>
                {#each win.history as [kind, text, state]}
                  <li class={state}>
                    <span class="now">{#if state === 'current'}{@render icon('mark', 's')}{/if}</span>
                    {@render icon(kind, 's')}{text}
                  </li>
                {/each}
              </ul>
              <footer>{win.undo}<button aria-label="清除历史">{@render icon('trash', 'm')}</button></footer>
            </section>
          </aside>

          <div class="center">
            <section class="panel editor">
              {@render tabs(['编辑器: 未命名 1 *', '混音器'], 0)}
              <div class="overview">
                <div class="strip">
                  <canvas use:paint={{ kind: 'overview', win }}></canvas>
                  <i class="head" style="left: {(win.head / win.length) * 100}%"></i>
                </div>
                <button class="off" aria-label="缩小全部">{@render icon('navzoom', 'xl')}</button>
                <button aria-label="显示轨道">{@render icon('rows', 'l')}</button>
              </div>
              <div class="frame">
                <div class="ruler">
                  <svg>
                    {#each seconds(win.length) as s}
                      <rect x="{(s / win.length) * 100}%" y={s % 2 ? 35 : 30} width="2" height="16" />
                      {#if s && s % 2 === 0}<text x="{(s / win.length) * 100}%" y="20" text-anchor="middle">{s}.0</text>{/if}
                    {/each}
                    <text x="5" y="20">hms</text>
                  </svg>
                  {#if win.hover}<i class="hover" style="left: {(win.hover / win.length) * 100}%"></i>{/if}
                  <svg class="cti" style="left: {(win.head / win.length) * 100}%" viewBox="0 0 20 20"><path d="M0 0h20v11l-8 9H8L0 11z" fill="#2f8cec" /><path d="M10 11v9" stroke="#123" /></svg>
                </div>
                <div class="snap">
                  <button aria-label="对齐">{@render icon('magnet')}</button>
                  <button aria-label="标记">{@render icon('tack')}</button>
                </div>

                <div class="plot">
                  <svg class="grid">
                    {#each seconds(win.length) as s}
                      {#if s % 2 === 0}<rect x="{(s / win.length) * 100}%" y="0" width="1" height="100%" />{/if}
                    {/each}
                    {#each [25, 75] as mid}
                      {#each dbMajor as d}
                        <rect x="0" y="{mid - amp(d) * 25}%" width="100%" height="1" />
                        <rect x="0" y="{mid + amp(d) * 25}%" width="100%" height="1" />
                      {/each}
                    {/each}
                    <rect class="split" x="0" y="50%" width="100%" height="2" />
                  </svg>
                  <canvas use:paint={{ kind: 'wave', win }}></canvas>
                  <svg class="fade in" viewBox="0 0 22 22"><path d="M0 0h22v22H0z" fill="#b4b4b4" /><path d="M2 20L20 2v18z" fill="#3a3a3a" /></svg>
                  <svg class="fade out" viewBox="0 0 22 22"><path d="M0 0h22v22H0z" fill="#b4b4b4" /><path d="M2 2l18 18H2z" fill="#3a3a3a" /></svg>
                  <i class="head" style="left: {(win.head / win.length) * 100}%"></i>
                  <div class="hud">
                    <span class="handle"></span>{@render icon('ramp', 'l')}{@render icon('dial', 'xxl')}<span><b>+0</b> dB</span>
                    <span class="bar"></span>
                    <button aria-label="固定">{@render icon('pin', 's')}</button>
                  </div>
                </div>
                <div class="axes">{@render axis('L')}{@render axis('R')}</div>

                <div class="splitter"><span></span><b>▼</b></div>

                <div class="plot spectrum">
                  <canvas use:paint={{ kind: 'spectrum', win }}></canvas>
                  <i class="head" style="left: {(win.head / win.length) * 100}%"></i>
                </div>
                <div class="axes">{@render hzAxis()}{@render hzAxis()}</div>
              </div>
              <div class="transport">
                <output>{win.time}</output>
                <span class="lead"></span>
                {#each transport as [name, label, state]}
                  <button class={state} aria-label={label}>{@render icon(name, transportSize(name))}</button>
                {/each}
                <span class="mid"></span>
                {#each zooms as [name, label, state]}
                  <button class={state} aria-label={label}>{@render icon(name, 'xl')}</button>
                {/each}
                <span class="tail"></span>
              </div>
            </section>
          </div>

          <section class="panel sliver">
            <h2>基本声音</h2>
            <p>无选择</p>
            <p class="dim">预设:</p>
            <p></p>
            <p></p>
          </section>

          <div class="bottom">
            <section class="panel level">
              <h2>电平<span class="burger"></span></h2>
              <div class="bigmeter"><i></i><b></b></div>
              <svg class="scale">
                {#each Array(61) as _, i}
                  <rect x="{0.5 + i * 1.63}%" y="0" width="2" height={i % 3 ? 4 : 8} />
                {/each}
                <text x="1%" y="23">dB</text>
                {#each levels as db, i}
                  <text x="{0.5 + (i + 1) * 4.89}%" y="23">{db}</text>
                {/each}
              </svg>
            </section>
            <section class="panel range">
              <h2>选区/视图<span class="burger"></span></h2>
              <table>
                <thead><tr><th></th><th>开始</th><th>结束</th><th>持续时间</th></tr></thead>
                <tbody>
                  <tr><th>选区</th><td>{win.time}</td><td>{win.time}</td><td>0:00.000</td></tr>
                  <tr><th>视图</th><td>0:00.000</td><td>{win.total}</td><td>{win.total}</td></tr>
                </tbody>
              </table>
            </section>
          </div>
        </div>

        <footer class="statusbar">
          <span class="state">已停止</span>
          <span class="cell"></span>
          <span class="cell"></span>
          <span class="cell">48000 Hz <i class="dot"></i> 32 位（浮点） <i class="dot"></i> 立体声</span>
          <span class="cell">{win.size}</span>
          <span class="cell len">{win.total}</span>
          <span class="cell">{win.free}</span>
          <span class="cell end"></span>
        </footer>
      </section>
    {/each}
  </main>

  <nav class="dock" aria-label="程序坞">
    {#each dock as d}
      {#if d.sep}
        <span class="sep"></span>
      {:else}
        <a href="#app" class="app" aria-label={d.name}>
          <svg viewBox="0 0 48 48">{@html d.svg}</svg>
          {#if d.badge}<span class="badge">{d.badge}</span>{/if}
          {#if d.on}<i class:warm={d.on === 2}></i>{/if}
        </a>
      {/if}
    {/each}
  </nav>
</div>

<style>
  :global(body) {
    background: #16181c;
  }

  .desktop {
    display: flex;
    flex-direction: column;
    height: 100vh;
    overflow: hidden;
    font: 21px/24px "Noto Sans CJK SC", "Noto Sans", sans-serif;
    color: #a3a3a3;
    background:
      linear-gradient(90deg, #2e6ca6 17%, #d0752e 18%, #d2782e 31%, #c7481b 33%, #ca4f1c 41%, #cf7c28 42%, #cb5a1c 60%, #c23a19 68%, #d0712a 69%, #d07428 76%, #c75a1e 90%, #c85818) bottom / 100% 92px no-repeat,
      linear-gradient(90deg, #58a3dc 18%, #f5b83c 19%, #f3a02c 60%, #5b9cd2 85%, #e4a45c) top / 100% 60px no-repeat,
      linear-gradient(#d8962a 18%, #a5a5a5 19%, #8e4a34 50%, #c3451c);
  }

  button, input, select {
    font: inherit;
    color: inherit;
    background: none;
    border: 0;
    padding: 0;
    margin: 0;
  }
  button {
    display: flex;
    align-items: center;
    justify-content: center;
    white-space: nowrap;
  }
  h1, h2, p, ul, ol { margin: 0; padding: 0; list-style: none; font-size: 21px; }

  .ic { flex: none; display: block; width: 24px; height: 24px; color: #b0b0b0; }
  .ic.xs { width: 16px; height: 16px; }
  .ic.s { width: 20px; height: 20px; }
  .ic.l { width: 28px; height: 28px; }
  .ic.xl { width: 32px; height: 32px; }
  .ic.xxl { width: 36px; height: 36px; }
  .off .ic { color: #525252; }
  .red .ic { color: #f53c3c; }
  .blue .ic, .on .ic { color: #2f8cec; }
  .burger {
    display: inline-block;
    width: 15px;
    height: 14px;
    background: repeating-linear-gradient(#b0b0b0 0 2px, transparent 2px 6px);
  }

  /* menu bar */
  .menubar {
    display: flex;
    align-items: center;
    gap: 37px;
    height: 43px;
    margin-bottom: 1px;
    padding: 0 33px 0 36px;
    font: 23px/30px Inter, "Noto Sans CJK SC", sans-serif;
    color: #222418;
    white-space: nowrap;
    background: linear-gradient(90deg, #a3e0ea 0, #bce3c8 15%, #d6e3a6 25%, #f0e089 32%, #fed970 42%, #fdd06f 55%, #e6cd93 68%, #d8c89c 77%, #b9c4bc 84%, #a0c0dc 92%, #9bbfdf);
  }
  .menubar b { font-weight: 700; }
  .apple { width: 22px; height: 27px; }
  .extras { display: flex; align-items: center; gap: 33px; margin-left: auto; }
  .extras.wide { gap: 36px; margin: 0; }
  .extras.last { gap: 20px; margin: 0 0 0 -16px; }
  .extras time { font-size: 24px; }
  .extra { width: 30px; height: 30px; display: block; }
  .pair { display: flex; align-items: center; gap: 8px; }
  .orange { width: 8px; height: 8px; border-radius: 50%; background: #f79a3a; }
  .stat { display: flex; align-items: center; gap: 8px; }
  .stat em { font: 700 11px/12px "Liberation Mono", monospace; width: 8px; white-space: normal; word-break: break-all; color: #222; }
  .graph { width: 107px; height: 34px; }
  .load { width: 16px; height: 34px; }
  .net { display: flex; align-items: center; gap: 36px; }
  .net .extra { width: 22px; }
  .net small { font: 15px/16px Inter, sans-serif; text-align: right; }
  .ime {
    width: 34px;
    height: 30px;
    line-height: 30px;
    text-align: center;
    border: 2px solid #222;
    border-radius: 5px;
    font-weight: 600;
    font-size: 21px;
  }

  /* windows */
  .windows {
    flex: 1;
    min-height: 0;
    display: flex;
    gap: 3px;
    padding-right: 2px;
  }
  .window {
    flex: 2178 1 0;
    min-width: 0;
    display: flex;
    flex-direction: column;
    margin-bottom: 4px;
    border-radius: 14px 14px 12px 12px;
    overflow: hidden;
    background: #161616;
  }
  .window.focused { flex-grow: 1913; margin-bottom: 0; }
  .title {
    display: flex;
    align-items: center;
    gap: 10px;
    height: 34px;
    padding-left: 9px;
    background: #f0ece8;
    border-bottom: 2px solid #000;
    box-sizing: border-box;
  }
  .title i { width: 16px; height: 16px; border-radius: 50%; background: #d3cdc9; box-shadow: inset 0 0 0 1px #bdb7b3; }
  .title h1 { flex: 1; margin-right: 87px; text-align: center; font: 20px/30px Inter, sans-serif; color: #aaa6a2; }
  .focused .title { background: #d8d2cf; }
  .focused .title h1 { color: #4a4644; }
  .focused .title i { background: #fe5f57; box-shadow: none; }
  .focused .title i:nth-child(2) { background: #febc2e; }
  .focused .title i:nth-child(3) { background: #28c840; }

  .bar { flex: none; }
  .toolbar {
    display: flex;
    align-items: center;
    height: 45px;
    margin-bottom: 7px;
    padding-left: 9px;
    background: #232323;
    white-space: nowrap;
  }
  .toolbar .bar { width: 2px; align-self: stretch; background: #303030; }
  .grip { width: 6px; height: 34px; margin-right: 7px; background: repeating-linear-gradient(#3c3c3c 0 2px, transparent 2px 5px); }
  .mode { display: flex; height: 35px; border: 2px solid #303030; border-radius: 5px; }
  .mode button { width: 115px; gap: 12px; }
  .mode .on, .workspace.on { color: #3f9de8; }
  .mode .on { background: #161616; border-right: 2px solid #303030; }
  .toolbar .first { margin: 0 34px 0 38px; }
  .tool { width: 48px; height: 39px; }
  .tool.boxed { width: 42px; background: #161616; border-radius: 5px; box-shadow: 0 0 0 2px #2e2e2e; }
  .spectral { margin: 0 12px 0 3px; }
  .tools { display: flex; margin-left: 8px; }
  .tools .tool.on { width: 38px; margin: 0 5px; background: #161616; border-radius: 5px; box-shadow: 0 0 0 2px #2e2e2e; }
  .toolbar .push { margin: 0 18px 0 auto; }
  .pill { width: 76px; height: 38px; border-radius: 19px; background: #2a2a2a; color: #5c5c5c; }
  .toolbar .after { margin: 0 38px 0 82px; }
  .focused .toolbar .after { margin: 0 40px 0 76px; }
  .workspace { gap: 21px; }
  .workspace .burger { background: repeating-linear-gradient(#2f8cec 0 2px, transparent 2px 6px); }
  .workspace.wide { margin: 0 72px 0 38px; }
  .dbl { margin: 0 18px 0 80px; }
  .help {
    display: flex;
    align-items: center;
    gap: 20px;
    width: 332px;
    height: 34px;
    margin: 0 9px 0 5px;
    padding-left: 8px;
    border: 2px solid #2e2e2e;
    border-radius: 5px;
    background: #161616;
  }
  .help input { width: 240px; }
  .help input::placeholder { color: #c8c8c8; opacity: 1; }
  .feedback { display: flex; gap: 22px; margin: 0 16px 0 256px; }

  .work {
    flex: 1;
    min-height: 0;
    display: grid;
    grid-template-columns: 572px minmax(0, 1fr) 72px;
    grid-template-rows: minmax(0, 1fr) 167px;
    column-gap: 7px;
    row-gap: 7px;
    padding-right: 3px;
  }
  .focused .work { grid-template-columns: 571px minmax(0, 1fr) 58px; padding-right: 4px; }
  .panel { background: #232323; min-width: 0; overflow: hidden; }
  .side {
    grid-row: 1 / 3;
    min-height: 0;
    display: grid;
    grid-template-rows: 840px auto minmax(0, 1fr);
    row-gap: 8px;
  }
  .focused .side { grid-template-rows: 457px auto minmax(0, 1fr); }
  .side .panel { display: flex; flex-direction: column; min-height: 0; }
  .center { display: grid; min-width: 0; min-height: 0; }
  .bottom {
    grid-column: 2 / 4;
    display: grid;
    grid-template-columns: minmax(0, 1fr) 455px;
    column-gap: 7px;
    margin-right: -3px;
  }
  .focused .bottom { grid-template-columns: minmax(0, 1fr) 452px; }

  .tabs { flex: none; display: flex; gap: 38px; height: 46px; padding-left: 21px; }
  .tab { gap: 17px; padding: 0 0 0 2px; border-bottom: 3px solid transparent; color: #969696; }
  .tab .burger { visibility: hidden; }
  .tab.active { color: #dedede; font-weight: 500; border-color: #bcbcbc; }
  .tab.active .burger { visibility: visible; }
  .cut { width: 2px; height: 28px; margin: 8px 0 0 -62px; background: #303030; }
  .overflow { margin: 0 7px 0 auto; }

  /* files */
  .filebar { display: flex; align-items: center; gap: 20px; margin: 11px 8px 0 19px; }
  .filebar .far { margin-left: 50px; }
  .search {
    flex: 1;
    display: flex;
    align-items: center;
    height: 33px;
    margin-left: -4px;
    padding-left: 10px;
    background: #161616;
    box-shadow: 0 0 0 2px #2c2c2c;
    border-radius: 4px;
  }
  .search input { width: 150px; }
  .colhead { display: flex; align-items: center; gap: 4px; height: 34px; margin: 8px 8px 3px 12px; padding-left: 8px; }
  .files { flex: 1; margin: 0 8px 0 11px; border: 2px solid #2b2b2b; background: #1c1c1c; position: relative; }
  .files li { display: flex; align-items: center; height: 32px; gap: 28px; padding-left: 5px; border-bottom: 2px solid #2b2b2b; }
  .files li .m { margin-right: -14px; }
  .files a { color: #3f9de8; text-decoration: none; }
  .files::after { content: ""; position: absolute; left: 0; bottom: 0; width: 119px; height: 17px; border-radius: 9px; background: #333; }
  .preview { display: flex; gap: 30px; justify-content: center; align-items: center; height: 57px; padding-left: 8px; }

  /* favourites */
  .favbar { display: flex; gap: 22px; align-items: center; height: 56px; padding-left: 24px; }
  .favs { position: relative; margin: 0 9px 0 10px; display: flex; gap: 2px; }
  .favs table { flex: 1; border-spacing: 0; table-layout: fixed; }
  .favs th { height: 36px; padding: 0 0 0 8px; text-align: left; font-weight: 400; }
  .favs th:first-child { width: 280px; }
  .favs td { height: 32px; padding: 0 0 0 10px; border-bottom: 2px solid #2b2b2b; background: #1c1c1c; }
  .favs tr:first-child td { border-top: 2px solid #2b2b2b; }
  .favs td:first-child { border-left: 2px solid #2b2b2b; }
  .favs td:last-child { border-right: 2px solid #2b2b2b; }
  .favs .thumb { position: absolute; right: 20px; top: 38px; width: 17px; height: 147px; border-radius: 9px; background: #303030; }
  .rail { width: 16px; background: #2c2c2c; display: flex; flex-direction: column; align-items: center; }
  .rail i { margin-top: 28px; border: 7px solid transparent; border-right-color: #909090; border-left: 0; }
  .rail b { width: 6px; height: 42px; margin-top: 107px; background: repeating-linear-gradient(#909090 0 2px, transparent 2px 4px); }

  /* effects rack */
  .preset { display: flex; align-items: center; gap: 13px; height: 33px; margin: 9px 12px 0 12px; }
  .preset label { margin-right: -8px; white-space: nowrap; }
  .pick { position: relative; flex: 1; display: flex; align-items: center; border: 2px solid #2d2d2d; border-radius: 4px; background: #1e1e1e; color: #d0d0d0; font-weight: 500; }
  .pick select { flex: 1; height: 30px; padding-left: 12px; appearance: none; }
  .pick .ic { position: absolute; right: 8px; pointer-events: none; }
  .preset .bar { width: 2px; height: 28px; background: #333; }
  .preset .bar + button { margin-left: -2px; }
  .target { height: 24px; margin: 11px 0 0 12px; font-weight: 500; }
  .rack { display: flex; gap: 2px; height: 337px; margin: 16px 8px 0 11px; border: 2px solid #2b2b2b; border-radius: 3px; background: #1c1c1c; }
  .rack ol { flex: 1; display: grid; grid-template-rows: repeat(10, 1fr); }
  .rack li { display: flex; align-items: center; border-bottom: 1px solid #2d2d2d; }
  .rack li span { width: 33px; text-align: center; }
  .rack li i { flex: 1; border-right: 2px solid #2b2b2b; align-self: stretch; }
  .rack li button { width: 30px; height: 28px; margin-left: 3px; border: 1px solid #2d2d2d; border-radius: 3px; }
  .rack li .arrow { border: 0; }
  .rack .thumb { width: 18px; height: 212px; margin: 2px 3px; border-radius: 9px; background: #303030; }
  .io {
    display: grid;
    grid-template-columns: 52px 167px 314px;
    grid-template-rows: 30px 30px 30px;
    row-gap: 12px;
    margin: 12px 0 2px 18px;
    align-items: center;
    color: #5c5c5c;
  }
  .io .label { white-space: nowrap; }
  .gain { display: flex; align-items: center; gap: 7px; }
  .gain .ic { color: #555; }
  .meter { height: 26px; border: 2px solid #000; background: #1c1c1c; display: flex; justify-content: space-between; }
  .meter i { width: 3px; margin: 1px 0 1px 2px; background: #f2ee2d; }
  .meter b { width: 16px; border-left: 2px solid #000; background: linear-gradient(transparent 12px, #000 12px 14px, transparent 14px); }
  .scale { display: block; width: 100%; height: 30px; fill: #a0a0a0; font-size: 17px; overflow: visible; }
  .scale text { text-anchor: middle; }
  .io .scale { grid-column: 3; margin-top: -22px; }
  .mix { display: flex; align-items: center; height: 24px; margin: 0 24px 0 18px; color: #5c5c5c; white-space: nowrap; }
  .mix label { width: 87px; }
  .mix input { flex: 1; margin: 0 8px 0 18px; height: 20px; appearance: none; }
  .mix input::-webkit-slider-runnable-track { height: 3px; background: #454545; }
  .mix input::-webkit-slider-thumb { appearance: none; width: 18px; height: 18px; margin-top: -8px; box-sizing: border-box; border: 3px solid #555; border-radius: 50%; background: #232323; }
  .mix output { margin-left: 44px; }
  .apply { display: flex; align-items: center; gap: 4px; margin: 14px 20px 0 9px; padding: 8px 0; border-top: 2px solid #303030; }
  .apply .square { width: 35px; height: 33px; border: 2px solid #2f2f2f; border-radius: 4px; box-sizing: border-box; }
  .apply .square.on { background: #161616; width: 38px; }
  .apply .pill { width: 108px; height: 33px; }
  .apply label { margin: 0 6px 0 auto; }
  .apply .pick { flex: none; width: 171px; }
  .apply .pick select { height: 29px; }

  /* history */
  .history ul { flex: 1; margin: 12px 8px 0 11px; border: 2px solid #2b2b2b; background: #1c1c1c; }
  .history li { display: flex; align-items: center; height: 33px; border-bottom: 1px solid #2b2b2b; gap: 16px; }
  .history .now { width: 20px; }
  .history .current { background: #464646; font-weight: 500; color: #b8b8b8; }
  .history .undone { color: #585858; }
  .history .undone .ic { color: #707070; }
  .history footer { display: flex; justify-content: space-between; align-items: center; height: 53px; padding: 0 17px 0 10px; }

  /* editor */
  .editor { display: flex; flex-direction: column; padding: 0 14px 0 12px; box-sizing: border-box; }
  .focused .editor { box-shadow: inset 0 0 0 2px #2f86e0; padding-right: 13px; }
  .editor .tabs { padding-left: 6px; }
  .overview { display: flex; align-items: center; gap: 19px; margin: 16px 29px 27px 0; }
  .strip {
    position: relative;
    flex: 1;
    height: 46px;
    margin: 0 0 0 -2px;
    border: solid #646464;
    border-width: 3px 6px;
    border-radius: 6px;
    background: #353535;
  }
  canvas { position: absolute; inset: 0; width: 100%; height: 100%; }
  .head { position: absolute; top: 0; bottom: 0; width: 2px; margin-left: -1px; background: #c3100c; }
  .frame {
    flex: 1;
    min-height: 0;
    display: grid;
    grid-template-columns: minmax(0, 1fr) 131px;
    grid-template-rows: 46px minmax(0, 55fr) 16px minmax(0, 45fr);
  }
  .ruler { position: relative; border: solid #000; border-width: 2px 2px 0 1px; }
  .ruler > svg:first-child { width: 100%; height: 44px; fill: #a0a0a0; overflow: hidden; display: block; }
  .axis text, .ruler text, .scale text { dominant-baseline: middle; font-family: "Noto Sans CJK SC", sans-serif; }
  .ruler text { font-size: 20px; }
  .hover { position: absolute; top: 0; bottom: 0; width: 2px; background: #27598c; }
  .cti { position: absolute; bottom: 0; width: 20px; height: 20px; margin-left: -10px; }
  .snap { display: flex; margin: 3px 0 0 12px; }
  .snap button { width: 36px; height: 38px; background: #161616; border: 1px solid #2d2d2d; border-radius: 4px; }
  .snap .ic { color: #2f8cec; }
  .plot { position: relative; background: #000; }
  .plot .grid { position: absolute; inset: 0; width: 100%; height: 100%; fill: #0e3412; }
  .grid .split { fill: #8c8c8c; }
  .spectrum .head { background: #efe3c4; }
  .fade { position: absolute; top: 6px; left: 23px; width: 22px; height: 22px; }
  .fade.out { left: auto; right: 22px; }
  .hud {
    position: absolute;
    top: 43px;
    left: 50%;
    margin-left: -111px;
    width: 222px;
    height: 46px;
    display: flex;
    align-items: center;
    gap: 6px;
    background: #1c1c1c;
    white-space: nowrap;
  }
  .hud .handle { width: 15px; align-self: stretch; background: #4a4a4a; }
  .hud b { color: #3f9de8; font-weight: 400; }
  .hud .bar { width: 2px; height: 34px; margin: 0 0 0 auto; background: #4c4c4c; }
  .hud button { margin-right: 7px; }
  .axes { display: grid; grid-template-rows: 1fr 1fr; border: solid #000; border-width: 2px 2px 2px 0; background: #232323; }
  .axis { position: relative; }
  .axis + .axis { border-top: 2px solid #000; }
  .axis svg { display: block; position: absolute; inset: 0; width: 100%; height: 100%; fill: #a0a0a0; font-size: 20px; overflow: hidden; }
  .axis .faint { fill: #5e5e5e; }
  .channel { position: absolute; right: 5px; top: 50%; margin-top: -16px; width: 36px; height: 34px; color: #3f9de8; font-size: 16px; background: #161616; border: 2px solid #2d2d2d; border-radius: 4px; }
  .splitter { grid-column: 1 / 3; display: grid; grid-template-columns: 1fr 131px; align-items: center; background: #333; }
  .splitter span { justify-self: center; width: 42px; height: 8px; margin-right: -131px; background: repeating-linear-gradient(90deg, #909090 0 2px, transparent 2px 4px); }
  .splitter b { justify-self: end; margin-right: 32px; font: 12px/16px "DejaVu Sans", sans-serif; color: #888; }
  .transport { display: flex; align-items: center; height: 66px; overflow: hidden; margin-right: -12px; padding-left: 8px; }
  .transport output { flex: none; width: 112px; font-size: 31px; line-height: 40px; color: #3f9de8; margin-top: 2px; }
  .transport button { flex: none; width: 53px; }
  .transport .lead { flex: 3 0 174px; }
  .transport .mid { flex: 3 0 17px; }
  .transport .tail { flex: 1 0 0; }

  .sliver h2 { height: 50px; line-height: 46px; width: 18px; margin-left: 22px; overflow: hidden; white-space: nowrap; font-weight: 700; color: #dedede; border-right: 2px solid #2d2d2d; }
  .sliver p { height: 59px; line-height: 59px; padding-left: 20px; border-top: 3px solid #303030; white-space: nowrap; overflow: hidden; color: #c0c0c0; }
  .sliver .dim { color: #5c5c5c; }
  .focused .sliver h2 { width: 7px; }

  /* lower panels */
  .bottom h2 { display: flex; align-items: center; gap: 17px; height: 49px; padding-left: 20px; font-weight: 500; color: #cfcfcf; }
  .bigmeter { display: flex; justify-content: space-between; height: 68px; margin: 10px 12px 0 9px; border: 2px solid #000; background: #1c1c1c; }
  .bigmeter i { width: 2px; margin-left: 1px; background: #f2ee2d; }
  .bigmeter b { width: 15px; border-left: 2px solid #000; background: linear-gradient(transparent 33px, #000 33px 35px, transparent 35px); }
  .level .scale { margin: 0 12px 0 9px; width: calc(100% - 21px); }
  .range table { border-spacing: 0; margin: 0 0 0 19px; table-layout: fixed; width: 450px; }
  .range th, .range td { height: 36px; padding: 0; text-align: left; font-weight: 400; white-space: nowrap; }
  .range th:first-child { width: 52px; }
  .range th:nth-child(2), .range th:nth-child(3) { width: 128px; }
  .range td { padding-left: 2px; color: #3f9de8; }

  .statusbar { display: flex; align-items: center; height: 35px; margin-top: 4px; background: #202020; white-space: nowrap; }
  .state { margin: 0 auto 0 13px; }
  .cell { padding: 0 11px 0 14px; min-width: 61px; height: 24px; border-left: 2px solid #2d2d2d; }
  .cell.len { padding-left: 27px; }
  .cell.end { min-width: 78px; }
  .dot { display: inline-block; width: 10px; height: 10px; margin-bottom: 2px; border-radius: 50%; background: #a3a3a3; }

  /* dock */
  .dock {
    flex: none;
    display: flex;
    height: 74px;
    margin: 2px 47px 9px 47px;
    padding: 0 2px;
    border: 1px solid #ffffff55;
    border-radius: 20px;
    background: linear-gradient(90deg, #74aae0 0, #69a6e2 15%, #e2a08a 17%, #ff9c5a 19%, #ffae5c 30%, #ff8a5a 34%, #ff8a5a 38%, #ffaa55 43%, #ff9555 52%, #ff7656 62%, #ff7656 67%, #ff9f55 73%, #ffa055 80%, #ff8d5a);
  }
  .app { flex: 1; position: relative; display: flex; flex-direction: column; align-items: center; padding-top: 12px; font-family: "Noto Sans CJK SC", sans-serif; }
  .app svg { width: 46px; height: 46px; overflow: visible; }
  .app i { width: 6px; height: 6px; margin-top: 7px; border-radius: 50%; background: #12306e; }
  .app i.warm { background: #8c1010; }
  .badge { position: absolute; top: 5px; right: 0; padding: 0 4px; border-radius: 12px; background: #f8423c; color: #fff; font: 13px/23px Inter, sans-serif; }
  .sep { width: 27px; margin: 10px 0; background: linear-gradient(90deg, transparent 12px, #b5623e 12px 14px, transparent 14px); }
</style>
